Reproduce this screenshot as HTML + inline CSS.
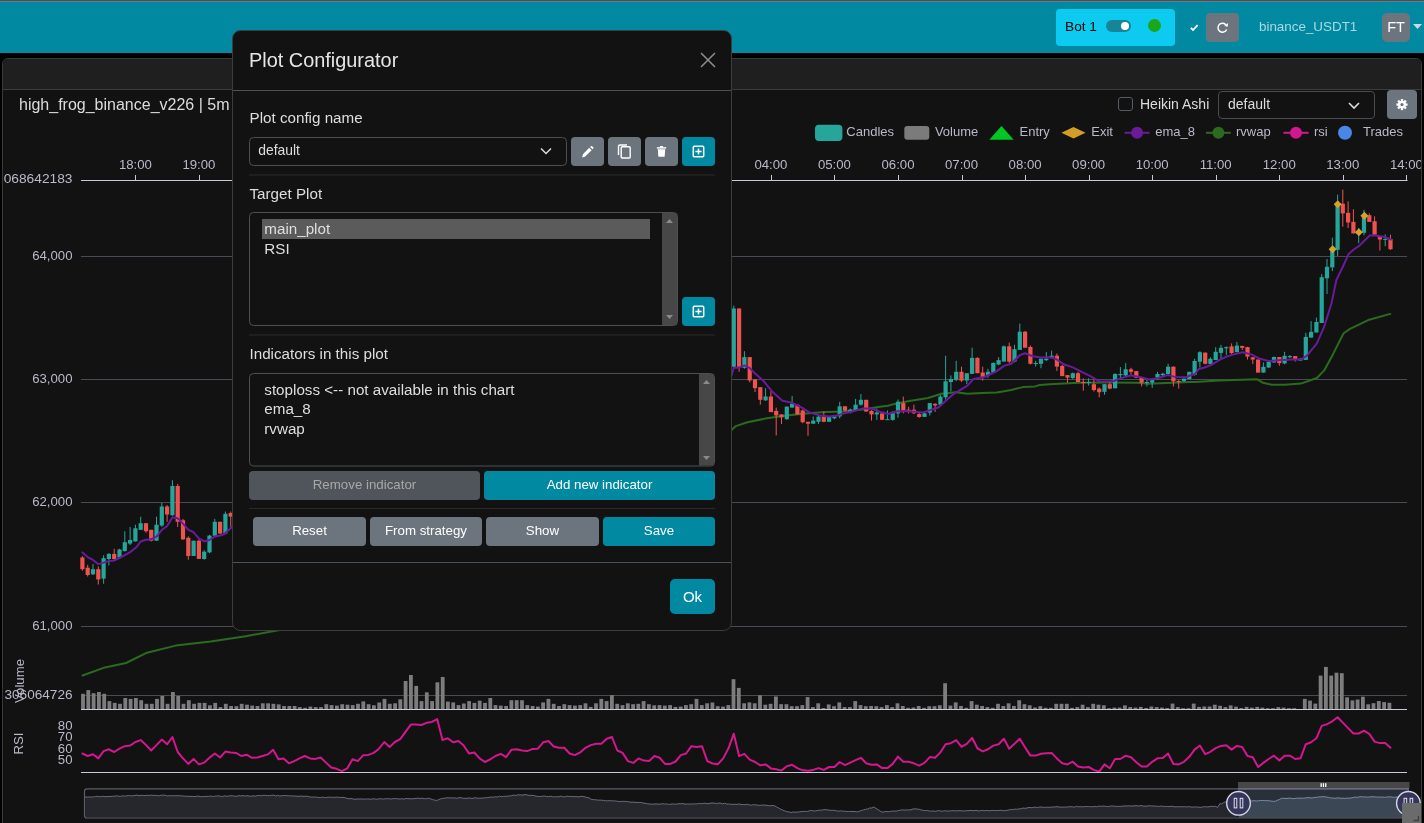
<!DOCTYPE html>
<html><head><meta charset="utf-8">
<style>
*{box-sizing:border-box;}
html,body{margin:0;padding:0;}
.abs{will-change:transform;}
body{width:1424px;height:823px;overflow:hidden;position:relative;background:#000;font-family:"Liberation Sans",sans-serif;color:#dee2e6;}
.abs{position:absolute;}
#topline0{left:0;top:0;width:1424px;height:1px;background:#41515b;}
#topline1{left:0;top:1px;width:1424px;height:1px;background:#6f7b82;}
#nav{left:0;top:2px;width:1424px;height:51px;background:#0289a2;}
#bot{left:1056px;top:9px;width:119px;height:37px;background:#0dcaf0;border-radius:4px;}
#bot .t{position:absolute;left:9px;top:10px;font-size:13.7px;color:#000;}
#sw{left:1106px;top:20px;width:25px;height:12px;border-radius:6px;background:#178596;}
#sw .k{position:absolute;left:15px;top:2px;width:8px;height:8px;border-radius:4px;background:#fff;}
#dot{left:1148px;top:19px;width:13px;height:13px;border-radius:50%;background:#1aa81a;}
#refresh{left:1206px;top:13px;width:33px;height:29px;background:#6c757d;border-radius:4px;}
#exch{left:1259px;top:19px;font-size:13.4px;color:#a9d9e2;}
#ft{left:1382px;top:13px;width:28px;height:29px;background:#6c757d;border-radius:5px;color:#fff;font-size:14.5px;text-align:center;line-height:29px;}
#card{left:2px;top:58px;width:1420px;height:780px;background:#121212;border:1px solid #393939;border-radius:6px;overflow:hidden;}
#cardhdr{left:0;top:0;width:1418px;height:31px;background:#1f1f1f;border-bottom:1px solid #3c3c3c;}
#title{left:19px;top:96px;font-size:16px;color:#dcdcdc;}
#chart{left:0;top:0;}
.lbl{font-family:"Liberation Sans",sans-serif;font-size:13.2px;fill:#b9b9ca;}
#hachk{left:1118px;top:97px;width:15px;height:14px;border:1px solid #555c63;border-radius:3px;background:#121212;}
#haLbl{left:1140px;top:96px;font-size:14px;color:#dcdcdc;}
#sel2{left:1218px;top:91px;width:157px;height:28px;border:1px solid #474c52;border-radius:4px;background:#121212;}
#sel2 .t{position:absolute;left:9px;top:3.5px;font-size:14px;color:#dcdcdc;}
#gear{left:1387px;top:90px;width:30px;height:29px;background:#6c757d;border-radius:4px;}
.legt{font-size:13px;color:#b9b9ca;position:absolute;top:124px;}
.mt{font-family:"Liberation Sans",sans-serif;font-size:19.9px;fill:#e6e6e6;}
.ml{font-family:"Liberation Sans",sans-serif;font-size:15.2px;fill:#dedede;}
.ms{font-family:"Liberation Sans",sans-serif;font-size:13.9px;fill:#dedede;}
.mb{font-family:"Liberation Sans",sans-serif;font-size:13.3px;}
.mok{font-family:"Liberation Sans",sans-serif;font-size:15px;}
/* modal */
#modal{left:232px;top:30px;width:500px;height:601px;background:#121212;border:1px solid #3d3d3d;border-radius:8px;}
#mhdr{left:0;top:0;width:498px;height:60px;border-bottom:1px solid #4a525a;}
#mtitle{left:16px;top:19px;font-size:19.9px;color:#e4e4e4;}
.mlbl{position:absolute;left:16px;font-size:15.2px;color:#dedede;}
.hr{position:absolute;left:16px;width:466px;height:1px;background:#2a2a2a;}
.btn{position:absolute;border-radius:4px;color:#fff;font-size:13.3px;text-align:center;}
.gray{background:#6c757d;}
.teal{background:#0289a2;}
#mfoot{left:0;top:531px;width:498px;height:1px;background:#4a525a;}
</style></head>
<body>
<div id="nav" class="abs"></div>
<div id="topline0" class="abs"></div>
<div id="topline1" class="abs"></div>
<div id="bot" class="abs"><span class="t">Bot 1</span></div>
<div id="sw" class="abs"><div class="k"></div></div>
<div id="dot" class="abs"></div>
<svg class="abs" style="left:1188px;top:21px" width="12" height="12" viewBox="0 0 12 12"><path d="M2.8,6.8 L5,9 L9.6,4.2" fill="none" stroke="#fff" stroke-width="1.8"/></svg>
<div id="refresh" class="abs"><svg width="33" height="29" viewBox="0 0 33 29"><g transform="translate(16.5,14.5) scale(0.85) translate(-16.5,-14.5)"><path d="M21.6,13.2 A5.3,5.3 0 1 0 21.4,16.8" fill="none" stroke="#fff" stroke-width="1.7"/><path d="M18.6,12.6 L22.8,13.4 L23.2,9.2 Z" fill="#fff"/></g></svg></div>
<div id="exch" class="abs">binance_USDT1</div>
<div id="ft" class="abs">FT</div>
<svg class="abs" style="left:1413px;top:24px" width="10" height="6"><path d="M0,0 L9,0 L4.5,5 Z" fill="#c8dde2"/></svg>

<div id="card" class="abs"><div id="cardhdr" class="abs"></div></div>
<div id="title" class="abs">high_frog_binance_v226 | 5m</div>

<svg id="chart" class="abs" width="1424" height="823" viewBox="0 0 1424 823">
<defs><clipPath id="cc"><rect x="3" y="59" width="1418" height="764"/></clipPath></defs>
<g clip-path="url(#cc)">
<line x1="81" y1="256.5" x2="1407" y2="256.5" stroke="#4a4956" stroke-width="1"/>
<line x1="81" y1="379.5" x2="1407" y2="379.5" stroke="#4a4956" stroke-width="1"/>
<line x1="81" y1="502.5" x2="1407" y2="502.5" stroke="#4a4956" stroke-width="1"/>
<line x1="81" y1="626.5" x2="1407" y2="626.5" stroke="#4a4956" stroke-width="1"/>
<line x1="81" y1="695.5" x2="1407" y2="695.5" stroke="#4a4956" stroke-width="1"/>
<line x1="135.5" y1="175" x2="135.5" y2="180.5" stroke="#c9c9dc" stroke-width="1"/>
<text x="135.4" y="169" text-anchor="middle" class="lbl">18:00</text>
<line x1="199.5" y1="175" x2="199.5" y2="180.5" stroke="#c9c9dc" stroke-width="1"/>
<text x="198.9" y="169" text-anchor="middle" class="lbl">19:00</text>
<line x1="262.5" y1="175" x2="262.5" y2="180.5" stroke="#c9c9dc" stroke-width="1"/>
<text x="262.5" y="169" text-anchor="middle" class="lbl">20:00</text>
<line x1="326.5" y1="175" x2="326.5" y2="180.5" stroke="#c9c9dc" stroke-width="1"/>
<text x="326.0" y="169" text-anchor="middle" class="lbl">21:00</text>
<line x1="390.5" y1="175" x2="390.5" y2="180.5" stroke="#c9c9dc" stroke-width="1"/>
<text x="389.6" y="169" text-anchor="middle" class="lbl">22:00</text>
<line x1="453.5" y1="175" x2="453.5" y2="180.5" stroke="#c9c9dc" stroke-width="1"/>
<text x="453.1" y="169" text-anchor="middle" class="lbl">23:00</text>
<line x1="517.5" y1="175" x2="517.5" y2="180.5" stroke="#c9c9dc" stroke-width="1"/>
<text x="516.7" y="169" text-anchor="middle" class="lbl">00:00</text>
<line x1="580.5" y1="175" x2="580.5" y2="180.5" stroke="#c9c9dc" stroke-width="1"/>
<text x="580.2" y="169" text-anchor="middle" class="lbl">01:00</text>
<line x1="644.5" y1="175" x2="644.5" y2="180.5" stroke="#c9c9dc" stroke-width="1"/>
<text x="643.8" y="169" text-anchor="middle" class="lbl">02:00</text>
<line x1="707.5" y1="175" x2="707.5" y2="180.5" stroke="#c9c9dc" stroke-width="1"/>
<text x="707.3" y="169" text-anchor="middle" class="lbl">03:00</text>
<line x1="771.5" y1="175" x2="771.5" y2="180.5" stroke="#c9c9dc" stroke-width="1"/>
<text x="770.9" y="169" text-anchor="middle" class="lbl">04:00</text>
<line x1="834.5" y1="175" x2="834.5" y2="180.5" stroke="#c9c9dc" stroke-width="1"/>
<text x="834.4" y="169" text-anchor="middle" class="lbl">05:00</text>
<line x1="898.5" y1="175" x2="898.5" y2="180.5" stroke="#c9c9dc" stroke-width="1"/>
<text x="898.0" y="169" text-anchor="middle" class="lbl">06:00</text>
<line x1="962.5" y1="175" x2="962.5" y2="180.5" stroke="#c9c9dc" stroke-width="1"/>
<text x="961.5" y="169" text-anchor="middle" class="lbl">07:00</text>
<line x1="1025.5" y1="175" x2="1025.5" y2="180.5" stroke="#c9c9dc" stroke-width="1"/>
<text x="1025.1" y="169" text-anchor="middle" class="lbl">08:00</text>
<line x1="1089.5" y1="175" x2="1089.5" y2="180.5" stroke="#c9c9dc" stroke-width="1"/>
<text x="1088.6" y="169" text-anchor="middle" class="lbl">09:00</text>
<line x1="1152.5" y1="175" x2="1152.5" y2="180.5" stroke="#c9c9dc" stroke-width="1"/>
<text x="1152.2" y="169" text-anchor="middle" class="lbl">10:00</text>
<line x1="1216.5" y1="175" x2="1216.5" y2="180.5" stroke="#c9c9dc" stroke-width="1"/>
<text x="1215.7" y="169" text-anchor="middle" class="lbl">11:00</text>
<line x1="1279.5" y1="175" x2="1279.5" y2="180.5" stroke="#c9c9dc" stroke-width="1"/>
<text x="1279.3" y="169" text-anchor="middle" class="lbl">12:00</text>
<line x1="1343.5" y1="175" x2="1343.5" y2="180.5" stroke="#c9c9dc" stroke-width="1"/>
<text x="1342.8" y="169" text-anchor="middle" class="lbl">13:00</text>
<line x1="1406.5" y1="175" x2="1406.5" y2="180.5" stroke="#c9c9dc" stroke-width="1"/>
<text x="1406.4" y="169" text-anchor="middle" class="lbl">14:00</text>
<line x1="81" y1="180.5" x2="1407.5" y2="180.5" stroke="#c9c9dc" stroke-width="1"/>
<text x="72.5" y="259.7" text-anchor="end" class="lbl">64,000</text>
<text x="72.5" y="382.7" text-anchor="end" class="lbl">63,000</text>
<text x="72.5" y="505.7" text-anchor="end" class="lbl">62,000</text>
<text x="72.5" y="629.7" text-anchor="end" class="lbl">61,000</text>
<text x="-4" y="183.4" class="lbl" textLength="76.5" lengthAdjust="spacingAndGlyphs">3068642183</text>
<text x="4.5" y="698.5" class="lbl" textLength="68" lengthAdjust="spacingAndGlyphs">306064726</text>
<polyline points="82.5,675.5 105.0,667.4 126.0,663.0 147.0,652.7 175.6,645.6 210.7,641.4 245.8,636.2 281.0,629.8 300.0,626.0" fill="none" stroke="#2b6b1f" stroke-width="2" stroke-linejoin="round" stroke-linecap="round"/>
<polyline points="731.5,430.0 735.8,426.1 747.4,422.2 766.9,418.3 786.3,415.4 805.8,413.4 825.2,412.1 844.6,411.5 864.1,409.2 880.0,406.8 888.0,405.7 894.6,403.9 909.2,401.0 928.1,398.0 941.3,393.7 955.8,392.2 967.5,393.7 982.1,392.9 996.7,392.5 1011.3,390.0 1022.9,387.1 1035.0,386.4 1040.0,384.9 1049.6,384.2 1078.8,382.7 1107.9,382.4 1137.1,382.7 1148.8,383.7 1166.3,383.0 1190.0,382.1 1195.0,382.0 1219.2,380.6 1257.1,379.2 1262.9,382.8 1271.7,384.7 1284.8,384.7 1300.9,383.6 1316.9,378.0 1324.2,370.4 1332.9,354.4 1343.2,334.0 1343.7,333.3 1350.0,328.9 1369.2,319.7 1390.3,313.9" fill="none" stroke="#2b6b1f" stroke-width="2" stroke-linejoin="round" stroke-linecap="round"/>
<rect x="81.9" y="556.1" width="1" height="14.6" fill="#ef5350"/>
<rect x="80.3" y="557.5" width="4.2" height="11.7" fill="#ef5350"/>
<rect x="87.2" y="564.8" width="1" height="11.7" fill="#ef5350"/>
<rect x="85.6" y="567.7" width="4.2" height="7.3" fill="#ef5350"/>
<rect x="92.5" y="564.1" width="1" height="10.9" fill="#26a69a"/>
<rect x="90.9" y="569.2" width="4.2" height="5.1" fill="#26a69a"/>
<rect x="97.8" y="566.3" width="1" height="18.2" fill="#ef5350"/>
<rect x="96.2" y="569.2" width="4.2" height="10.2" fill="#ef5350"/>
<rect x="103.1" y="555.3" width="1" height="28.4" fill="#26a69a"/>
<rect x="101.5" y="558.2" width="4.2" height="20.4" fill="#26a69a"/>
<rect x="108.4" y="553.1" width="1" height="12.4" fill="#26a69a"/>
<rect x="106.8" y="553.9" width="4.2" height="5.1" fill="#26a69a"/>
<rect x="113.7" y="548.8" width="1" height="10.9" fill="#ef5350"/>
<rect x="112.1" y="553.9" width="4.2" height="5.1" fill="#ef5350"/>
<rect x="119.0" y="548.8" width="1" height="10.2" fill="#26a69a"/>
<rect x="117.4" y="549.5" width="4.2" height="8.0" fill="#26a69a"/>
<rect x="124.3" y="531.3" width="1" height="20.4" fill="#26a69a"/>
<rect x="122.7" y="542.2" width="4.2" height="8.8" fill="#26a69a"/>
<rect x="129.6" y="526.9" width="1" height="18.2" fill="#26a69a"/>
<rect x="128.0" y="540.0" width="4.2" height="3.6" fill="#26a69a"/>
<rect x="134.9" y="524.7" width="1" height="16.8" fill="#26a69a"/>
<rect x="133.3" y="528.3" width="4.2" height="13.1" fill="#26a69a"/>
<rect x="140.2" y="516.7" width="1" height="13.1" fill="#26a69a"/>
<rect x="138.6" y="523.2" width="4.2" height="6.6" fill="#26a69a"/>
<rect x="145.5" y="523.2" width="1" height="9.5" fill="#ef5350"/>
<rect x="143.9" y="523.2" width="4.2" height="8.0" fill="#ef5350"/>
<rect x="150.7" y="529.8" width="1" height="11.7" fill="#ef5350"/>
<rect x="149.1" y="529.8" width="4.2" height="10.9" fill="#ef5350"/>
<rect x="156.0" y="516.7" width="1" height="24.1" fill="#26a69a"/>
<rect x="154.4" y="524.7" width="4.2" height="16.0" fill="#26a69a"/>
<rect x="161.3" y="502.8" width="1" height="24.1" fill="#26a69a"/>
<rect x="159.7" y="506.5" width="4.2" height="19.0" fill="#26a69a"/>
<rect x="166.6" y="505.0" width="1" height="16.8" fill="#ef5350"/>
<rect x="165.0" y="506.5" width="4.2" height="8.0" fill="#ef5350"/>
<rect x="171.9" y="480.2" width="1" height="35.7" fill="#26a69a"/>
<rect x="170.3" y="486.0" width="4.2" height="29.2" fill="#26a69a"/>
<rect x="177.2" y="483.9" width="1" height="43.0" fill="#ef5350"/>
<rect x="175.6" y="486.0" width="4.2" height="35.7" fill="#ef5350"/>
<rect x="182.5" y="518.9" width="1" height="21.1" fill="#ef5350"/>
<rect x="180.9" y="520.3" width="4.2" height="19.0" fill="#ef5350"/>
<rect x="187.8" y="536.4" width="1" height="23.3" fill="#ef5350"/>
<rect x="186.2" y="537.8" width="4.2" height="18.2" fill="#ef5350"/>
<rect x="193.1" y="540.7" width="1" height="15.3" fill="#26a69a"/>
<rect x="191.5" y="540.7" width="4.2" height="15.3" fill="#26a69a"/>
<rect x="198.4" y="539.3" width="1" height="19.7" fill="#ef5350"/>
<rect x="196.8" y="540.7" width="4.2" height="18.2" fill="#ef5350"/>
<rect x="203.7" y="550.2" width="1" height="9.5" fill="#26a69a"/>
<rect x="202.1" y="551.7" width="4.2" height="7.3" fill="#26a69a"/>
<rect x="209.0" y="534.9" width="1" height="18.2" fill="#26a69a"/>
<rect x="207.4" y="535.6" width="4.2" height="16.8" fill="#26a69a"/>
<rect x="214.3" y="518.9" width="1" height="17.5" fill="#26a69a"/>
<rect x="212.7" y="521.8" width="4.2" height="13.9" fill="#26a69a"/>
<rect x="219.6" y="521.8" width="1" height="12.4" fill="#ef5350"/>
<rect x="218.0" y="521.8" width="4.2" height="11.7" fill="#ef5350"/>
<rect x="224.9" y="511.6" width="1" height="22.6" fill="#26a69a"/>
<rect x="223.3" y="513.8" width="4.2" height="19.7" fill="#26a69a"/>
<rect x="230.2" y="511.6" width="1" height="15.3" fill="#ef5350"/>
<rect x="228.6" y="513.0" width="4.2" height="3.6" fill="#ef5350"/>
<rect x="733.3" y="305.6" width="1" height="61.2" fill="#26a69a"/>
<rect x="731.7" y="308.5" width="4.2" height="58.3" fill="#26a69a"/>
<rect x="738.6" y="308.5" width="1" height="63.2" fill="#ef5350"/>
<rect x="737.0" y="308.5" width="4.2" height="58.3" fill="#ef5350"/>
<rect x="743.9" y="351.2" width="1" height="17.5" fill="#26a69a"/>
<rect x="742.3" y="357.1" width="4.2" height="10.7" fill="#26a69a"/>
<rect x="749.2" y="357.1" width="1" height="25.3" fill="#ef5350"/>
<rect x="747.6" y="357.1" width="4.2" height="23.3" fill="#ef5350"/>
<rect x="754.5" y="379.4" width="1" height="12.6" fill="#ef5350"/>
<rect x="752.9" y="379.4" width="4.2" height="8.7" fill="#ef5350"/>
<rect x="759.8" y="387.2" width="1" height="17.5" fill="#ef5350"/>
<rect x="758.2" y="387.2" width="4.2" height="12.6" fill="#ef5350"/>
<rect x="765.1" y="388.2" width="1" height="12.6" fill="#26a69a"/>
<rect x="763.5" y="396.5" width="4.2" height="3.9" fill="#26a69a"/>
<rect x="770.4" y="391.1" width="1" height="21.0" fill="#ef5350"/>
<rect x="768.8" y="396.5" width="4.2" height="15.6" fill="#ef5350"/>
<rect x="775.7" y="407.6" width="1" height="27.8" fill="#ef5350"/>
<rect x="774.1" y="410.9" width="4.2" height="4.5" fill="#ef5350"/>
<rect x="781.0" y="414.4" width="1" height="9.7" fill="#ef5350"/>
<rect x="779.4" y="414.4" width="4.2" height="2.9" fill="#ef5350"/>
<rect x="786.3" y="406.6" width="1" height="13.2" fill="#26a69a"/>
<rect x="784.7" y="406.6" width="4.2" height="12.6" fill="#26a69a"/>
<rect x="791.6" y="395.9" width="1" height="11.7" fill="#26a69a"/>
<rect x="790.0" y="403.7" width="4.2" height="3.9" fill="#26a69a"/>
<rect x="796.9" y="404.7" width="1" height="9.7" fill="#ef5350"/>
<rect x="795.3" y="404.7" width="4.2" height="9.7" fill="#ef5350"/>
<rect x="802.2" y="409.6" width="1" height="13.6" fill="#ef5350"/>
<rect x="800.6" y="410.5" width="4.2" height="11.7" fill="#ef5350"/>
<rect x="807.5" y="421.8" width="1" height="14.0" fill="#ef5350"/>
<rect x="805.9" y="421.8" width="4.2" height="1.9" fill="#ef5350"/>
<rect x="812.7" y="416.4" width="1" height="7.4" fill="#26a69a"/>
<rect x="811.1" y="420.6" width="4.2" height="3.1" fill="#26a69a"/>
<rect x="818.0" y="415.4" width="1" height="8.7" fill="#26a69a"/>
<rect x="816.4" y="416.7" width="4.2" height="5.1" fill="#26a69a"/>
<rect x="823.3" y="411.5" width="1" height="10.7" fill="#ef5350"/>
<rect x="821.7" y="416.4" width="4.2" height="5.4" fill="#ef5350"/>
<rect x="828.6" y="416.4" width="1" height="5.4" fill="#26a69a"/>
<rect x="827.0" y="416.4" width="4.2" height="5.4" fill="#26a69a"/>
<rect x="833.9" y="415.4" width="1" height="3.9" fill="#26a69a"/>
<rect x="832.3" y="416.4" width="4.2" height="1.9" fill="#26a69a"/>
<rect x="839.2" y="401.8" width="1" height="16.5" fill="#26a69a"/>
<rect x="837.6" y="406.3" width="4.2" height="10.1" fill="#26a69a"/>
<rect x="844.5" y="406.3" width="1" height="5.2" fill="#ef5350"/>
<rect x="842.9" y="406.3" width="4.2" height="4.3" fill="#ef5350"/>
<rect x="849.8" y="408.6" width="1" height="4.9" fill="#26a69a"/>
<rect x="848.2" y="409.6" width="4.2" height="2.9" fill="#26a69a"/>
<rect x="855.1" y="398.9" width="1" height="11.7" fill="#26a69a"/>
<rect x="853.5" y="404.7" width="4.2" height="5.8" fill="#26a69a"/>
<rect x="860.4" y="394.0" width="1" height="11.7" fill="#26a69a"/>
<rect x="858.8" y="399.8" width="4.2" height="4.9" fill="#26a69a"/>
<rect x="865.7" y="399.8" width="1" height="11.7" fill="#ef5350"/>
<rect x="864.1" y="399.8" width="4.2" height="11.7" fill="#ef5350"/>
<rect x="871.0" y="410.1" width="1" height="10.5" fill="#ef5350"/>
<rect x="869.4" y="410.9" width="4.2" height="3.5" fill="#ef5350"/>
<rect x="876.3" y="408.6" width="1" height="11.3" fill="#26a69a"/>
<rect x="874.7" y="412.5" width="4.2" height="1.9" fill="#26a69a"/>
<rect x="881.6" y="413.4" width="1" height="6.8" fill="#ef5350"/>
<rect x="880.0" y="413.4" width="4.2" height="6.4" fill="#ef5350"/>
<rect x="886.9" y="410.4" width="1" height="9.5" fill="#26a69a"/>
<rect x="885.3" y="419.2" width="4.2" height="1.0" fill="#26a69a"/>
<rect x="892.2" y="411.2" width="1" height="9.5" fill="#26a69a"/>
<rect x="890.6" y="411.9" width="4.2" height="8.0" fill="#26a69a"/>
<rect x="897.5" y="399.5" width="1" height="18.2" fill="#26a69a"/>
<rect x="895.9" y="401.7" width="4.2" height="11.7" fill="#26a69a"/>
<rect x="902.8" y="396.6" width="1" height="16.8" fill="#ef5350"/>
<rect x="901.2" y="403.1" width="4.2" height="7.3" fill="#ef5350"/>
<rect x="908.1" y="406.8" width="1" height="6.6" fill="#ef5350"/>
<rect x="906.5" y="409.7" width="4.2" height="1.5" fill="#ef5350"/>
<rect x="913.4" y="404.6" width="1" height="9.5" fill="#ef5350"/>
<rect x="911.8" y="409.7" width="4.2" height="3.6" fill="#ef5350"/>
<rect x="918.7" y="412.6" width="1" height="5.1" fill="#ef5350"/>
<rect x="917.1" y="414.1" width="4.2" height="2.9" fill="#ef5350"/>
<rect x="924.0" y="412.6" width="1" height="4.4" fill="#26a69a"/>
<rect x="922.4" y="413.3" width="4.2" height="3.6" fill="#26a69a"/>
<rect x="929.3" y="403.1" width="1" height="12.4" fill="#26a69a"/>
<rect x="927.7" y="403.1" width="4.2" height="9.5" fill="#26a69a"/>
<rect x="934.6" y="403.1" width="1" height="8.8" fill="#ef5350"/>
<rect x="933.0" y="403.9" width="4.2" height="1.5" fill="#ef5350"/>
<rect x="939.9" y="395.1" width="1" height="10.2" fill="#26a69a"/>
<rect x="938.3" y="396.6" width="4.2" height="8.0" fill="#26a69a"/>
<rect x="945.1" y="355.7" width="1" height="43.8" fill="#26a69a"/>
<rect x="943.5" y="381.3" width="4.2" height="16.0" fill="#26a69a"/>
<rect x="950.4" y="375.4" width="1" height="16.0" fill="#26a69a"/>
<rect x="948.8" y="379.1" width="4.2" height="2.9" fill="#26a69a"/>
<rect x="955.7" y="360.8" width="1" height="20.4" fill="#26a69a"/>
<rect x="954.1" y="371.8" width="4.2" height="8.0" fill="#26a69a"/>
<rect x="961.0" y="366.7" width="1" height="15.3" fill="#ef5350"/>
<rect x="959.4" y="371.8" width="4.2" height="8.8" fill="#ef5350"/>
<rect x="966.3" y="373.2" width="1" height="10.9" fill="#26a69a"/>
<rect x="964.7" y="373.2" width="4.2" height="7.3" fill="#26a69a"/>
<rect x="971.6" y="347.7" width="1" height="26.3" fill="#26a69a"/>
<rect x="970.0" y="357.9" width="4.2" height="16.0" fill="#26a69a"/>
<rect x="976.9" y="357.2" width="1" height="16.0" fill="#ef5350"/>
<rect x="975.3" y="357.9" width="4.2" height="15.3" fill="#ef5350"/>
<rect x="982.2" y="366.7" width="1" height="13.9" fill="#ef5350"/>
<rect x="980.6" y="372.5" width="4.2" height="4.4" fill="#ef5350"/>
<rect x="987.5" y="368.9" width="1" height="8.8" fill="#26a69a"/>
<rect x="985.9" y="371.8" width="4.2" height="3.6" fill="#26a69a"/>
<rect x="992.8" y="362.3" width="1" height="10.2" fill="#26a69a"/>
<rect x="991.2" y="363.0" width="4.2" height="9.5" fill="#26a69a"/>
<rect x="998.1" y="357.2" width="1" height="8.0" fill="#26a69a"/>
<rect x="996.5" y="360.1" width="4.2" height="4.4" fill="#26a69a"/>
<rect x="1003.4" y="345.5" width="1" height="16.0" fill="#26a69a"/>
<rect x="1001.8" y="346.3" width="4.2" height="15.3" fill="#26a69a"/>
<rect x="1008.7" y="342.6" width="1" height="20.4" fill="#ef5350"/>
<rect x="1007.1" y="346.3" width="4.2" height="15.3" fill="#ef5350"/>
<rect x="1014.0" y="344.8" width="1" height="17.5" fill="#26a69a"/>
<rect x="1012.4" y="349.2" width="4.2" height="12.4" fill="#26a69a"/>
<rect x="1019.3" y="323.6" width="1" height="26.3" fill="#26a69a"/>
<rect x="1017.7" y="331.7" width="4.2" height="18.2" fill="#26a69a"/>
<rect x="1024.6" y="330.9" width="1" height="16.8" fill="#ef5350"/>
<rect x="1023.0" y="331.7" width="4.2" height="16.0" fill="#ef5350"/>
<rect x="1029.9" y="345.5" width="1" height="19.0" fill="#ef5350"/>
<rect x="1028.3" y="347.0" width="4.2" height="16.8" fill="#ef5350"/>
<rect x="1035.2" y="360.8" width="1" height="5.8" fill="#26a69a"/>
<rect x="1033.6" y="363.0" width="4.2" height="1.0" fill="#26a69a"/>
<rect x="1040.5" y="358.7" width="1" height="9.5" fill="#26a69a"/>
<rect x="1038.9" y="358.7" width="4.2" height="5.1" fill="#26a69a"/>
<rect x="1045.8" y="352.1" width="1" height="8.8" fill="#26a69a"/>
<rect x="1044.2" y="358.7" width="4.2" height="1.5" fill="#26a69a"/>
<rect x="1051.1" y="350.6" width="1" height="7.3" fill="#26a69a"/>
<rect x="1049.5" y="355.7" width="4.2" height="1.5" fill="#26a69a"/>
<rect x="1056.4" y="353.5" width="1" height="17.5" fill="#ef5350"/>
<rect x="1054.8" y="355.7" width="4.2" height="10.9" fill="#ef5350"/>
<rect x="1061.7" y="364.5" width="1" height="11.7" fill="#ef5350"/>
<rect x="1060.1" y="365.9" width="4.2" height="10.2" fill="#ef5350"/>
<rect x="1067.0" y="375.1" width="1" height="7.6" fill="#ef5350"/>
<rect x="1065.4" y="375.1" width="4.2" height="2.5" fill="#ef5350"/>
<rect x="1072.3" y="372.5" width="1" height="6.6" fill="#26a69a"/>
<rect x="1070.7" y="373.2" width="4.2" height="4.8" fill="#26a69a"/>
<rect x="1077.5" y="371.8" width="1" height="10.2" fill="#ef5350"/>
<rect x="1075.9" y="373.2" width="4.2" height="8.8" fill="#ef5350"/>
<rect x="1082.8" y="378.3" width="1" height="12.4" fill="#ef5350"/>
<rect x="1081.2" y="382.0" width="4.2" height="1.0" fill="#ef5350"/>
<rect x="1088.1" y="378.3" width="1" height="7.3" fill="#26a69a"/>
<rect x="1086.5" y="382.0" width="4.2" height="1.0" fill="#26a69a"/>
<rect x="1093.4" y="379.1" width="1" height="12.4" fill="#ef5350"/>
<rect x="1091.8" y="384.2" width="4.2" height="5.8" fill="#ef5350"/>
<rect x="1098.7" y="387.4" width="1" height="9.9" fill="#ef5350"/>
<rect x="1097.1" y="388.6" width="4.2" height="3.6" fill="#ef5350"/>
<rect x="1104.0" y="384.2" width="1" height="10.5" fill="#26a69a"/>
<rect x="1102.4" y="384.2" width="4.2" height="7.6" fill="#26a69a"/>
<rect x="1109.3" y="382.0" width="1" height="7.3" fill="#ef5350"/>
<rect x="1107.7" y="384.2" width="4.2" height="4.4" fill="#ef5350"/>
<rect x="1114.6" y="373.2" width="1" height="15.0" fill="#26a69a"/>
<rect x="1113.0" y="374.0" width="4.2" height="14.3" fill="#26a69a"/>
<rect x="1119.9" y="367.0" width="1" height="12.1" fill="#26a69a"/>
<rect x="1118.3" y="374.0" width="4.2" height="1.2" fill="#26a69a"/>
<rect x="1125.2" y="363.0" width="1" height="13.1" fill="#26a69a"/>
<rect x="1123.6" y="369.3" width="4.2" height="6.1" fill="#26a69a"/>
<rect x="1130.5" y="367.8" width="1" height="6.9" fill="#ef5350"/>
<rect x="1128.9" y="369.3" width="4.2" height="2.5" fill="#ef5350"/>
<rect x="1135.8" y="371.1" width="1" height="7.0" fill="#ef5350"/>
<rect x="1134.2" y="371.1" width="4.2" height="6.6" fill="#ef5350"/>
<rect x="1141.1" y="376.9" width="1" height="9.5" fill="#ef5350"/>
<rect x="1139.5" y="377.6" width="4.2" height="5.1" fill="#ef5350"/>
<rect x="1146.4" y="379.8" width="1" height="6.6" fill="#26a69a"/>
<rect x="1144.8" y="382.0" width="4.2" height="1.0" fill="#26a69a"/>
<rect x="1151.7" y="379.1" width="1" height="8.8" fill="#26a69a"/>
<rect x="1150.1" y="380.1" width="4.2" height="2.6" fill="#26a69a"/>
<rect x="1157.0" y="371.8" width="1" height="8.0" fill="#26a69a"/>
<rect x="1155.4" y="374.0" width="4.2" height="3.6" fill="#26a69a"/>
<rect x="1162.3" y="372.8" width="1" height="3.8" fill="#26a69a"/>
<rect x="1160.7" y="373.7" width="4.2" height="1.5" fill="#26a69a"/>
<rect x="1167.6" y="363.8" width="1" height="10.9" fill="#26a69a"/>
<rect x="1166.0" y="366.7" width="4.2" height="7.3" fill="#26a69a"/>
<rect x="1172.9" y="366.4" width="1" height="20.0" fill="#ef5350"/>
<rect x="1171.3" y="366.7" width="4.2" height="14.6" fill="#ef5350"/>
<rect x="1178.2" y="380.1" width="1" height="8.5" fill="#ef5350"/>
<rect x="1176.6" y="381.0" width="4.2" height="1.0" fill="#ef5350"/>
<rect x="1183.5" y="378.3" width="1" height="3.6" fill="#26a69a"/>
<rect x="1181.9" y="378.6" width="4.2" height="2.6" fill="#26a69a"/>
<rect x="1188.8" y="371.8" width="1" height="7.3" fill="#26a69a"/>
<rect x="1187.2" y="371.8" width="4.2" height="7.3" fill="#26a69a"/>
<rect x="1194.1" y="358.8" width="1" height="16.8" fill="#26a69a"/>
<rect x="1192.5" y="361.0" width="4.2" height="13.9" fill="#26a69a"/>
<rect x="1199.4" y="351.2" width="1" height="16.3" fill="#26a69a"/>
<rect x="1197.8" y="352.2" width="4.2" height="9.5" fill="#26a69a"/>
<rect x="1204.7" y="352.6" width="1" height="11.7" fill="#ef5350"/>
<rect x="1203.1" y="352.6" width="4.2" height="11.2" fill="#ef5350"/>
<rect x="1209.9" y="357.3" width="1" height="7.3" fill="#26a69a"/>
<rect x="1208.3" y="358.8" width="4.2" height="5.1" fill="#26a69a"/>
<rect x="1215.2" y="347.1" width="1" height="12.8" fill="#26a69a"/>
<rect x="1213.6" y="351.8" width="4.2" height="8.2" fill="#26a69a"/>
<rect x="1220.5" y="344.9" width="1" height="13.9" fill="#26a69a"/>
<rect x="1218.9" y="347.8" width="4.2" height="5.1" fill="#26a69a"/>
<rect x="1225.8" y="346.4" width="1" height="8.8" fill="#26a69a"/>
<rect x="1224.2" y="347.1" width="4.2" height="1.2" fill="#26a69a"/>
<rect x="1231.1" y="343.4" width="1" height="10.9" fill="#ef5350"/>
<rect x="1229.5" y="346.4" width="4.2" height="6.6" fill="#ef5350"/>
<rect x="1236.4" y="342.0" width="1" height="10.2" fill="#26a69a"/>
<rect x="1234.8" y="345.6" width="4.2" height="6.6" fill="#26a69a"/>
<rect x="1241.7" y="345.9" width="1" height="4.1" fill="#ef5350"/>
<rect x="1240.1" y="345.9" width="4.2" height="1.9" fill="#ef5350"/>
<rect x="1247.0" y="346.8" width="1" height="12.7" fill="#ef5350"/>
<rect x="1245.4" y="347.1" width="4.2" height="9.5" fill="#ef5350"/>
<rect x="1252.3" y="357.3" width="1" height="6.6" fill="#ef5350"/>
<rect x="1250.7" y="357.3" width="4.2" height="2.2" fill="#ef5350"/>
<rect x="1257.6" y="359.5" width="1" height="13.1" fill="#ef5350"/>
<rect x="1256.0" y="359.5" width="4.2" height="13.1" fill="#ef5350"/>
<rect x="1262.9" y="362.4" width="1" height="10.2" fill="#26a69a"/>
<rect x="1261.3" y="366.8" width="4.2" height="5.8" fill="#26a69a"/>
<rect x="1268.2" y="361.7" width="1" height="6.1" fill="#26a69a"/>
<rect x="1266.6" y="361.7" width="4.2" height="5.8" fill="#26a69a"/>
<rect x="1273.5" y="356.6" width="1" height="6.3" fill="#26a69a"/>
<rect x="1271.9" y="357.0" width="4.2" height="5.4" fill="#26a69a"/>
<rect x="1278.8" y="357.0" width="1" height="8.8" fill="#ef5350"/>
<rect x="1277.2" y="357.0" width="4.2" height="6.1" fill="#ef5350"/>
<rect x="1284.1" y="351.8" width="1" height="12.5" fill="#26a69a"/>
<rect x="1282.5" y="355.8" width="4.2" height="7.6" fill="#26a69a"/>
<rect x="1289.4" y="355.1" width="1" height="2.9" fill="#26a69a"/>
<rect x="1287.8" y="356.1" width="4.2" height="1.2" fill="#26a69a"/>
<rect x="1294.7" y="356.1" width="1" height="5.5" fill="#ef5350"/>
<rect x="1293.1" y="356.1" width="4.2" height="3.8" fill="#ef5350"/>
<rect x="1300.0" y="358.0" width="1" height="2.9" fill="#26a69a"/>
<rect x="1298.4" y="358.8" width="4.2" height="1.8" fill="#26a69a"/>
<rect x="1305.3" y="332.8" width="1" height="27.1" fill="#26a69a"/>
<rect x="1303.7" y="336.9" width="4.2" height="23.0" fill="#26a69a"/>
<rect x="1310.6" y="321.1" width="1" height="16.5" fill="#26a69a"/>
<rect x="1309.0" y="331.8" width="4.2" height="5.8" fill="#26a69a"/>
<rect x="1315.9" y="317.6" width="1" height="14.9" fill="#26a69a"/>
<rect x="1314.3" y="322.0" width="4.2" height="10.5" fill="#26a69a"/>
<rect x="1321.2" y="274.1" width="1" height="48.9" fill="#26a69a"/>
<rect x="1319.6" y="277.2" width="4.2" height="45.8" fill="#26a69a"/>
<rect x="1326.5" y="259.0" width="1" height="35.0" fill="#26a69a"/>
<rect x="1324.9" y="266.8" width="4.2" height="11.5" fill="#26a69a"/>
<rect x="1331.8" y="237.7" width="1" height="33.4" fill="#26a69a"/>
<rect x="1330.2" y="248.6" width="4.2" height="18.8" fill="#26a69a"/>
<rect x="1337.1" y="194.6" width="1" height="61.3" fill="#26a69a"/>
<rect x="1335.5" y="204.3" width="4.2" height="45.5" fill="#26a69a"/>
<rect x="1342.3" y="189.7" width="1" height="37.0" fill="#ef5350"/>
<rect x="1340.7" y="203.7" width="4.2" height="9.7" fill="#ef5350"/>
<rect x="1347.6" y="201.3" width="1" height="26.7" fill="#ef5350"/>
<rect x="1346.0" y="212.8" width="4.2" height="9.7" fill="#ef5350"/>
<rect x="1352.9" y="209.2" width="1" height="24.3" fill="#ef5350"/>
<rect x="1351.3" y="221.9" width="4.2" height="11.5" fill="#ef5350"/>
<rect x="1358.2" y="228.0" width="1" height="15.2" fill="#26a69a"/>
<rect x="1356.6" y="231.0" width="4.2" height="2.4" fill="#26a69a"/>
<rect x="1363.5" y="209.8" width="1" height="25.5" fill="#26a69a"/>
<rect x="1361.9" y="216.4" width="4.2" height="16.4" fill="#26a69a"/>
<rect x="1368.8" y="213.4" width="1" height="8.5" fill="#ef5350"/>
<rect x="1367.2" y="215.2" width="4.2" height="6.7" fill="#ef5350"/>
<rect x="1374.1" y="216.4" width="1" height="18.2" fill="#ef5350"/>
<rect x="1372.5" y="221.3" width="4.2" height="13.4" fill="#ef5350"/>
<rect x="1379.4" y="236.5" width="1" height="14.0" fill="#ef5350"/>
<rect x="1377.8" y="237.1" width="4.2" height="2.4" fill="#ef5350"/>
<rect x="1384.7" y="234.4" width="1" height="11.8" fill="#26a69a"/>
<rect x="1383.1" y="238.9" width="4.2" height="1.0" fill="#26a69a"/>
<rect x="1390.0" y="234.7" width="1" height="15.2" fill="#ef5350"/>
<rect x="1388.4" y="238.9" width="4.2" height="10.3" fill="#ef5350"/>
<polyline points="82.4,552.4 88.2,557.5 92.6,559.7 98.4,564.1 103.5,562.6 108.6,561.2 114.5,560.4 120.3,557.5 129.8,552.4 136.3,547.3 140.7,541.5 145.8,539.7 150.9,539.3 156.8,536.4 161.9,529.8 167.0,526.2 172.5,517.4 177.2,518.1 180.1,520.3 188.4,529.8 193.2,532.0 199.1,538.6 204.9,541.5 209.3,540.0 215.1,536.4 220.2,535.6 223.9,534.2 231.9,526.9" fill="none" stroke="#6a1b9a" stroke-width="2" stroke-linejoin="round" stroke-linecap="round"/>
<polyline points="731.5,375.5 733.8,367.8 738.7,367.8 744.5,365.4 749.4,367.8 755.2,373.6 763.0,380.4 772.7,392.1 782.4,400.8 792.2,402.8 801.9,407.6 809.6,412.5 819.4,415.4 829.1,416.4 836.9,415.4 844.6,413.4 852.4,411.5 862.1,408.6 871.9,408.6 880.0,411.9 883.5,412.5 887.3,414.1 888.0,414.0 897.5,411.2 909.2,411.2 922.3,412.6 938.3,407.5 952.9,394.4 967.5,385.6 973.3,379.1 985.0,376.9 996.7,371.1 1004.0,365.9 1011.3,363.8 1020.0,355.0 1025.1,353.3 1033.2,356.5 1035.0,356.5 1040.0,357.6 1042.3,357.6 1049.6,357.2 1055.4,358.7 1064.2,364.5 1072.9,367.4 1081.7,371.8 1090.4,376.2 1099.2,381.3 1107.9,381.6 1113.8,381.0 1122.5,377.6 1131.3,375.4 1140.0,376.9 1148.8,379.5 1157.5,378.3 1167.7,375.1 1175.0,376.9 1186.7,377.2 1190.0,375.5 1195.0,374.0 1198.8,369.0 1204.6,367.5 1210.4,365.3 1219.2,360.2 1226.5,356.6 1233.8,354.4 1242.5,352.2 1251.3,354.4 1260.0,358.8 1268.8,361.0 1277.5,360.2 1292.1,359.5 1300.9,359.5 1306.7,355.8 1316.9,343.4 1324.2,326.7 1331.5,303.3 1336.4,280.0 1342.5,267.5 1348.6,254.1 1353.4,249.8 1359.5,245.6 1365.6,239.5 1369.8,235.6 1375.3,235.6 1385.0,237.1 1390.9,239.5" fill="none" stroke="#6a1b9a" stroke-width="2" stroke-linejoin="round" stroke-linecap="round"/>
<path d="M1332.6,245.2 L1336.6,249.2 L1332.6,253.2 L1328.6,249.2 Z" fill="#d4a22b"/>
<path d="M1337.7,200.3 L1341.7,204.3 L1337.7,208.3 L1333.7,204.3 Z" fill="#d4a22b"/>
<path d="M1358.9,228.2 L1362.9,232.2 L1358.9,236.2 L1354.9,232.2 Z" fill="#d4a22b"/>
<path d="M1364.4,211.8 L1368.4,215.8 L1364.4,219.8 L1360.4,215.8 Z" fill="#d4a22b"/>
<rect x="81.1" y="693.8" width="3.8" height="15.5" fill="#7d7d7d"/>
<rect x="86.4" y="690.1" width="3.8" height="19.2" fill="#7d7d7d"/>
<rect x="91.7" y="693.2" width="3.8" height="16.1" fill="#7d7d7d"/>
<rect x="97.0" y="692.0" width="3.8" height="17.3" fill="#7d7d7d"/>
<rect x="102.3" y="693.8" width="3.8" height="15.5" fill="#7d7d7d"/>
<rect x="107.5" y="701.1" width="3.8" height="8.2" fill="#7d7d7d"/>
<rect x="112.8" y="702.9" width="3.8" height="6.4" fill="#7d7d7d"/>
<rect x="118.1" y="703.8" width="3.8" height="5.5" fill="#7d7d7d"/>
<rect x="123.4" y="698.0" width="3.8" height="11.3" fill="#7d7d7d"/>
<rect x="128.7" y="698.9" width="3.8" height="10.4" fill="#7d7d7d"/>
<rect x="134.0" y="698.0" width="3.8" height="11.3" fill="#7d7d7d"/>
<rect x="139.3" y="700.2" width="3.8" height="9.1" fill="#7d7d7d"/>
<rect x="144.6" y="703.8" width="3.8" height="5.5" fill="#7d7d7d"/>
<rect x="149.9" y="703.8" width="3.8" height="5.5" fill="#7d7d7d"/>
<rect x="155.1" y="698.9" width="3.8" height="10.4" fill="#7d7d7d"/>
<rect x="160.4" y="696.0" width="3.8" height="13.3" fill="#7d7d7d"/>
<rect x="165.7" y="703.8" width="3.8" height="5.5" fill="#7d7d7d"/>
<rect x="171.0" y="692.0" width="3.8" height="17.3" fill="#7d7d7d"/>
<rect x="176.3" y="696.0" width="3.8" height="13.3" fill="#7d7d7d"/>
<rect x="181.6" y="703.8" width="3.8" height="5.5" fill="#7d7d7d"/>
<rect x="186.9" y="700.2" width="3.8" height="9.1" fill="#7d7d7d"/>
<rect x="192.2" y="703.8" width="3.8" height="5.5" fill="#7d7d7d"/>
<rect x="197.5" y="702.9" width="3.8" height="6.4" fill="#7d7d7d"/>
<rect x="202.7" y="702.9" width="3.8" height="6.4" fill="#7d7d7d"/>
<rect x="208.0" y="705.3" width="3.8" height="4.0" fill="#7d7d7d"/>
<rect x="213.3" y="702.9" width="3.8" height="6.4" fill="#7d7d7d"/>
<rect x="218.6" y="707.1" width="3.8" height="2.2" fill="#7d7d7d"/>
<rect x="223.9" y="703.8" width="3.8" height="5.5" fill="#7d7d7d"/>
<rect x="229.2" y="706.0" width="3.8" height="3.3" fill="#7d7d7d"/>
<rect x="234.5" y="706.2" width="3.8" height="3.1" fill="#7d7d7d"/>
<rect x="239.8" y="703.8" width="3.8" height="5.5" fill="#7d7d7d"/>
<rect x="245.1" y="704.7" width="3.8" height="4.6" fill="#7d7d7d"/>
<rect x="250.3" y="705.6" width="3.8" height="3.7" fill="#7d7d7d"/>
<rect x="255.6" y="706.0" width="3.8" height="3.3" fill="#7d7d7d"/>
<rect x="260.9" y="703.3" width="3.8" height="6.0" fill="#7d7d7d"/>
<rect x="266.2" y="703.3" width="3.8" height="6.0" fill="#7d7d7d"/>
<rect x="271.5" y="703.8" width="3.8" height="5.5" fill="#7d7d7d"/>
<rect x="276.8" y="704.4" width="3.8" height="4.9" fill="#7d7d7d"/>
<rect x="282.1" y="706.0" width="3.8" height="3.3" fill="#7d7d7d"/>
<rect x="287.4" y="706.0" width="3.8" height="3.3" fill="#7d7d7d"/>
<rect x="292.7" y="706.0" width="3.8" height="3.3" fill="#7d7d7d"/>
<rect x="297.9" y="707.1" width="3.8" height="2.2" fill="#7d7d7d"/>
<rect x="303.2" y="707.8" width="3.8" height="1.5" fill="#7d7d7d"/>
<rect x="308.5" y="706.6" width="3.8" height="2.7" fill="#7d7d7d"/>
<rect x="313.8" y="707.1" width="3.8" height="2.2" fill="#7d7d7d"/>
<rect x="319.1" y="707.1" width="3.8" height="2.2" fill="#7d7d7d"/>
<rect x="324.4" y="704.2" width="3.8" height="5.1" fill="#7d7d7d"/>
<rect x="329.7" y="705.1" width="3.8" height="4.2" fill="#7d7d7d"/>
<rect x="335.0" y="705.6" width="3.8" height="3.7" fill="#7d7d7d"/>
<rect x="340.3" y="704.2" width="3.8" height="5.1" fill="#7d7d7d"/>
<rect x="345.6" y="704.7" width="3.8" height="4.6" fill="#7d7d7d"/>
<rect x="350.8" y="705.1" width="3.8" height="4.2" fill="#7d7d7d"/>
<rect x="356.1" y="703.8" width="3.8" height="5.5" fill="#7d7d7d"/>
<rect x="361.4" y="701.4" width="3.8" height="7.9" fill="#7d7d7d"/>
<rect x="366.7" y="704.2" width="3.8" height="5.1" fill="#7d7d7d"/>
<rect x="372.0" y="705.3" width="3.8" height="4.0" fill="#7d7d7d"/>
<rect x="377.3" y="702.5" width="3.8" height="6.8" fill="#7d7d7d"/>
<rect x="382.6" y="698.9" width="3.8" height="10.4" fill="#7d7d7d"/>
<rect x="387.9" y="703.8" width="3.8" height="5.5" fill="#7d7d7d"/>
<rect x="393.2" y="703.3" width="3.8" height="6.0" fill="#7d7d7d"/>
<rect x="398.4" y="699.3" width="3.8" height="10.0" fill="#7d7d7d"/>
<rect x="403.7" y="681.0" width="3.8" height="28.3" fill="#7d7d7d"/>
<rect x="409.0" y="675.0" width="3.8" height="34.3" fill="#7d7d7d"/>
<rect x="414.3" y="685.9" width="3.8" height="23.4" fill="#7d7d7d"/>
<rect x="419.6" y="701.1" width="3.8" height="8.2" fill="#7d7d7d"/>
<rect x="424.9" y="692.3" width="3.8" height="17.0" fill="#7d7d7d"/>
<rect x="430.2" y="701.1" width="3.8" height="8.2" fill="#7d7d7d"/>
<rect x="435.5" y="682.3" width="3.8" height="27.0" fill="#7d7d7d"/>
<rect x="440.8" y="677.0" width="3.8" height="32.3" fill="#7d7d7d"/>
<rect x="446.0" y="701.6" width="3.8" height="7.7" fill="#7d7d7d"/>
<rect x="451.3" y="702.4" width="3.8" height="6.9" fill="#7d7d7d"/>
<rect x="456.6" y="705.1" width="3.8" height="4.2" fill="#7d7d7d"/>
<rect x="461.9" y="703.5" width="3.8" height="5.8" fill="#7d7d7d"/>
<rect x="467.2" y="701.1" width="3.8" height="8.2" fill="#7d7d7d"/>
<rect x="472.5" y="702.9" width="3.8" height="6.4" fill="#7d7d7d"/>
<rect x="477.8" y="700.7" width="3.8" height="8.6" fill="#7d7d7d"/>
<rect x="483.1" y="702.9" width="3.8" height="6.4" fill="#7d7d7d"/>
<rect x="488.4" y="698.0" width="3.8" height="11.3" fill="#7d7d7d"/>
<rect x="493.6" y="705.1" width="3.8" height="4.2" fill="#7d7d7d"/>
<rect x="498.9" y="705.6" width="3.8" height="3.7" fill="#7d7d7d"/>
<rect x="504.2" y="706.0" width="3.8" height="3.3" fill="#7d7d7d"/>
<rect x="509.5" y="700.2" width="3.8" height="9.1" fill="#7d7d7d"/>
<rect x="514.8" y="700.2" width="3.8" height="9.1" fill="#7d7d7d"/>
<rect x="520.1" y="700.2" width="3.8" height="9.1" fill="#7d7d7d"/>
<rect x="525.4" y="705.1" width="3.8" height="4.2" fill="#7d7d7d"/>
<rect x="530.7" y="706.0" width="3.8" height="3.3" fill="#7d7d7d"/>
<rect x="536.0" y="706.6" width="3.8" height="2.7" fill="#7d7d7d"/>
<rect x="541.2" y="702.4" width="3.8" height="6.9" fill="#7d7d7d"/>
<rect x="546.5" y="698.9" width="3.8" height="10.4" fill="#7d7d7d"/>
<rect x="551.8" y="703.8" width="3.8" height="5.5" fill="#7d7d7d"/>
<rect x="557.1" y="706.0" width="3.8" height="3.3" fill="#7d7d7d"/>
<rect x="562.4" y="704.2" width="3.8" height="5.1" fill="#7d7d7d"/>
<rect x="567.7" y="705.1" width="3.8" height="4.2" fill="#7d7d7d"/>
<rect x="573.0" y="705.6" width="3.8" height="3.7" fill="#7d7d7d"/>
<rect x="578.3" y="705.1" width="3.8" height="4.2" fill="#7d7d7d"/>
<rect x="583.6" y="703.3" width="3.8" height="6.0" fill="#7d7d7d"/>
<rect x="588.8" y="706.9" width="3.8" height="2.4" fill="#7d7d7d"/>
<rect x="594.1" y="703.3" width="3.8" height="6.0" fill="#7d7d7d"/>
<rect x="599.4" y="698.9" width="3.8" height="10.4" fill="#7d7d7d"/>
<rect x="604.7" y="701.1" width="3.8" height="8.2" fill="#7d7d7d"/>
<rect x="610.0" y="695.1" width="3.8" height="14.2" fill="#7d7d7d"/>
<rect x="615.3" y="703.8" width="3.8" height="5.5" fill="#7d7d7d"/>
<rect x="620.6" y="705.1" width="3.8" height="4.2" fill="#7d7d7d"/>
<rect x="625.9" y="703.3" width="3.8" height="6.0" fill="#7d7d7d"/>
<rect x="631.2" y="704.2" width="3.8" height="5.1" fill="#7d7d7d"/>
<rect x="636.4" y="703.8" width="3.8" height="5.5" fill="#7d7d7d"/>
<rect x="641.7" y="701.1" width="3.8" height="8.2" fill="#7d7d7d"/>
<rect x="647.0" y="704.2" width="3.8" height="5.1" fill="#7d7d7d"/>
<rect x="652.3" y="705.3" width="3.8" height="4.0" fill="#7d7d7d"/>
<rect x="657.6" y="705.1" width="3.8" height="4.2" fill="#7d7d7d"/>
<rect x="662.9" y="705.6" width="3.8" height="3.7" fill="#7d7d7d"/>
<rect x="668.2" y="705.1" width="3.8" height="4.2" fill="#7d7d7d"/>
<rect x="673.5" y="706.9" width="3.8" height="2.4" fill="#7d7d7d"/>
<rect x="678.8" y="706.6" width="3.8" height="2.7" fill="#7d7d7d"/>
<rect x="684.0" y="705.1" width="3.8" height="4.2" fill="#7d7d7d"/>
<rect x="689.3" y="704.2" width="3.8" height="5.1" fill="#7d7d7d"/>
<rect x="694.6" y="698.9" width="3.8" height="10.4" fill="#7d7d7d"/>
<rect x="699.9" y="705.1" width="3.8" height="4.2" fill="#7d7d7d"/>
<rect x="705.2" y="703.3" width="3.8" height="6.0" fill="#7d7d7d"/>
<rect x="710.5" y="702.5" width="3.8" height="6.8" fill="#7d7d7d"/>
<rect x="715.8" y="706.2" width="3.8" height="3.1" fill="#7d7d7d"/>
<rect x="721.1" y="706.6" width="3.8" height="2.7" fill="#7d7d7d"/>
<rect x="726.4" y="705.1" width="3.8" height="4.2" fill="#7d7d7d"/>
<rect x="731.6" y="679.2" width="3.8" height="30.1" fill="#7d7d7d"/>
<rect x="736.9" y="687.9" width="3.8" height="21.4" fill="#7d7d7d"/>
<rect x="742.2" y="703.3" width="3.8" height="6.0" fill="#7d7d7d"/>
<rect x="747.5" y="702.4" width="3.8" height="6.9" fill="#7d7d7d"/>
<rect x="752.8" y="703.3" width="3.8" height="6.0" fill="#7d7d7d"/>
<rect x="758.1" y="695.2" width="3.8" height="14.1" fill="#7d7d7d"/>
<rect x="763.4" y="704.7" width="3.8" height="4.6" fill="#7d7d7d"/>
<rect x="768.7" y="703.8" width="3.8" height="5.5" fill="#7d7d7d"/>
<rect x="774.0" y="696.5" width="3.8" height="12.8" fill="#7d7d7d"/>
<rect x="779.2" y="704.2" width="3.8" height="5.1" fill="#7d7d7d"/>
<rect x="784.5" y="704.2" width="3.8" height="5.1" fill="#7d7d7d"/>
<rect x="789.8" y="706.2" width="3.8" height="3.1" fill="#7d7d7d"/>
<rect x="795.1" y="706.2" width="3.8" height="3.1" fill="#7d7d7d"/>
<rect x="800.4" y="705.1" width="3.8" height="4.2" fill="#7d7d7d"/>
<rect x="805.7" y="697.1" width="3.8" height="12.2" fill="#7d7d7d"/>
<rect x="811.0" y="707.1" width="3.8" height="2.2" fill="#7d7d7d"/>
<rect x="816.3" y="703.3" width="3.8" height="6.0" fill="#7d7d7d"/>
<rect x="821.6" y="708.0" width="3.8" height="1.3" fill="#7d7d7d"/>
<rect x="826.8" y="704.4" width="3.8" height="4.9" fill="#7d7d7d"/>
<rect x="832.1" y="706.2" width="3.8" height="3.1" fill="#7d7d7d"/>
<rect x="837.4" y="702.4" width="3.8" height="6.9" fill="#7d7d7d"/>
<rect x="842.7" y="707.1" width="3.8" height="2.2" fill="#7d7d7d"/>
<rect x="848.0" y="707.1" width="3.8" height="2.2" fill="#7d7d7d"/>
<rect x="853.3" y="701.1" width="3.8" height="8.2" fill="#7d7d7d"/>
<rect x="858.6" y="705.1" width="3.8" height="4.2" fill="#7d7d7d"/>
<rect x="863.9" y="706.2" width="3.8" height="3.1" fill="#7d7d7d"/>
<rect x="869.2" y="706.0" width="3.8" height="3.3" fill="#7d7d7d"/>
<rect x="874.4" y="706.2" width="3.8" height="3.1" fill="#7d7d7d"/>
<rect x="879.7" y="707.1" width="3.8" height="2.2" fill="#7d7d7d"/>
<rect x="885.0" y="705.1" width="3.8" height="4.2" fill="#7d7d7d"/>
<rect x="890.3" y="707.1" width="3.8" height="2.2" fill="#7d7d7d"/>
<rect x="895.6" y="703.3" width="3.8" height="6.0" fill="#7d7d7d"/>
<rect x="900.9" y="706.0" width="3.8" height="3.3" fill="#7d7d7d"/>
<rect x="906.2" y="707.8" width="3.8" height="1.5" fill="#7d7d7d"/>
<rect x="911.5" y="707.5" width="3.8" height="1.8" fill="#7d7d7d"/>
<rect x="916.8" y="706.0" width="3.8" height="3.3" fill="#7d7d7d"/>
<rect x="922.1" y="707.8" width="3.8" height="1.5" fill="#7d7d7d"/>
<rect x="927.3" y="706.2" width="3.8" height="3.1" fill="#7d7d7d"/>
<rect x="932.6" y="706.2" width="3.8" height="3.1" fill="#7d7d7d"/>
<rect x="937.9" y="705.3" width="3.8" height="4.0" fill="#7d7d7d"/>
<rect x="943.2" y="683.2" width="3.8" height="26.1" fill="#7d7d7d"/>
<rect x="948.5" y="705.6" width="3.8" height="3.7" fill="#7d7d7d"/>
<rect x="953.8" y="702.4" width="3.8" height="6.9" fill="#7d7d7d"/>
<rect x="959.1" y="706.0" width="3.8" height="3.3" fill="#7d7d7d"/>
<rect x="964.4" y="707.8" width="3.8" height="1.5" fill="#7d7d7d"/>
<rect x="969.7" y="701.1" width="3.8" height="8.2" fill="#7d7d7d"/>
<rect x="974.9" y="704.7" width="3.8" height="4.6" fill="#7d7d7d"/>
<rect x="980.2" y="706.0" width="3.8" height="3.3" fill="#7d7d7d"/>
<rect x="985.5" y="707.1" width="3.8" height="2.2" fill="#7d7d7d"/>
<rect x="990.8" y="707.8" width="3.8" height="1.5" fill="#7d7d7d"/>
<rect x="996.1" y="703.8" width="3.8" height="5.5" fill="#7d7d7d"/>
<rect x="1001.4" y="706.0" width="3.8" height="3.3" fill="#7d7d7d"/>
<rect x="1006.7" y="703.3" width="3.8" height="6.0" fill="#7d7d7d"/>
<rect x="1012.0" y="706.0" width="3.8" height="3.3" fill="#7d7d7d"/>
<rect x="1017.3" y="700.2" width="3.8" height="9.1" fill="#7d7d7d"/>
<rect x="1022.5" y="704.2" width="3.8" height="5.1" fill="#7d7d7d"/>
<rect x="1027.8" y="705.3" width="3.8" height="4.0" fill="#7d7d7d"/>
<rect x="1033.1" y="707.5" width="3.8" height="1.8" fill="#7d7d7d"/>
<rect x="1038.4" y="706.2" width="3.8" height="3.1" fill="#7d7d7d"/>
<rect x="1043.7" y="707.8" width="3.8" height="1.5" fill="#7d7d7d"/>
<rect x="1049.0" y="707.8" width="3.8" height="1.5" fill="#7d7d7d"/>
<rect x="1054.3" y="703.8" width="3.8" height="5.5" fill="#7d7d7d"/>
<rect x="1059.6" y="703.8" width="3.8" height="5.5" fill="#7d7d7d"/>
<rect x="1064.9" y="703.8" width="3.8" height="5.5" fill="#7d7d7d"/>
<rect x="1070.1" y="707.8" width="3.8" height="1.5" fill="#7d7d7d"/>
<rect x="1075.4" y="707.1" width="3.8" height="2.2" fill="#7d7d7d"/>
<rect x="1080.7" y="704.7" width="3.8" height="4.6" fill="#7d7d7d"/>
<rect x="1086.0" y="707.1" width="3.8" height="2.2" fill="#7d7d7d"/>
<rect x="1091.3" y="703.8" width="3.8" height="5.5" fill="#7d7d7d"/>
<rect x="1096.6" y="704.7" width="3.8" height="4.6" fill="#7d7d7d"/>
<rect x="1101.9" y="705.3" width="3.8" height="4.0" fill="#7d7d7d"/>
<rect x="1107.2" y="708.2" width="3.8" height="1.1" fill="#7d7d7d"/>
<rect x="1112.5" y="707.6" width="3.8" height="1.7" fill="#7d7d7d"/>
<rect x="1117.7" y="707.6" width="3.8" height="1.7" fill="#7d7d7d"/>
<rect x="1123.0" y="705.4" width="3.8" height="3.9" fill="#7d7d7d"/>
<rect x="1128.3" y="707.1" width="3.8" height="2.2" fill="#7d7d7d"/>
<rect x="1133.6" y="707.6" width="3.8" height="1.7" fill="#7d7d7d"/>
<rect x="1138.9" y="706.9" width="3.8" height="2.4" fill="#7d7d7d"/>
<rect x="1144.2" y="708.0" width="3.8" height="1.3" fill="#7d7d7d"/>
<rect x="1149.5" y="706.5" width="3.8" height="2.8" fill="#7d7d7d"/>
<rect x="1154.8" y="707.1" width="3.8" height="2.2" fill="#7d7d7d"/>
<rect x="1160.1" y="707.6" width="3.8" height="1.7" fill="#7d7d7d"/>
<rect x="1165.3" y="708.0" width="3.8" height="1.3" fill="#7d7d7d"/>
<rect x="1170.6" y="703.6" width="3.8" height="5.7" fill="#7d7d7d"/>
<rect x="1175.9" y="707.1" width="3.8" height="2.2" fill="#7d7d7d"/>
<rect x="1181.2" y="708.2" width="3.8" height="1.1" fill="#7d7d7d"/>
<rect x="1186.5" y="708.2" width="3.8" height="1.1" fill="#7d7d7d"/>
<rect x="1191.8" y="703.6" width="3.8" height="5.7" fill="#7d7d7d"/>
<rect x="1197.1" y="706.9" width="3.8" height="2.4" fill="#7d7d7d"/>
<rect x="1202.4" y="706.5" width="3.8" height="2.8" fill="#7d7d7d"/>
<rect x="1207.7" y="706.5" width="3.8" height="2.8" fill="#7d7d7d"/>
<rect x="1212.9" y="704.7" width="3.8" height="4.6" fill="#7d7d7d"/>
<rect x="1218.2" y="705.8" width="3.8" height="3.5" fill="#7d7d7d"/>
<rect x="1223.5" y="707.1" width="3.8" height="2.2" fill="#7d7d7d"/>
<rect x="1228.8" y="705.4" width="3.8" height="3.9" fill="#7d7d7d"/>
<rect x="1234.1" y="706.7" width="3.8" height="2.6" fill="#7d7d7d"/>
<rect x="1239.4" y="708.0" width="3.8" height="1.3" fill="#7d7d7d"/>
<rect x="1244.7" y="706.9" width="3.8" height="2.4" fill="#7d7d7d"/>
<rect x="1250.0" y="707.6" width="3.8" height="1.7" fill="#7d7d7d"/>
<rect x="1255.3" y="706.9" width="3.8" height="2.4" fill="#7d7d7d"/>
<rect x="1260.5" y="707.6" width="3.8" height="1.7" fill="#7d7d7d"/>
<rect x="1265.8" y="708.2" width="3.8" height="1.1" fill="#7d7d7d"/>
<rect x="1271.1" y="708.2" width="3.8" height="1.1" fill="#7d7d7d"/>
<rect x="1276.4" y="707.1" width="3.8" height="2.2" fill="#7d7d7d"/>
<rect x="1281.7" y="707.6" width="3.8" height="1.7" fill="#7d7d7d"/>
<rect x="1287.0" y="708.2" width="3.8" height="1.1" fill="#7d7d7d"/>
<rect x="1292.3" y="708.2" width="3.8" height="1.1" fill="#7d7d7d"/>
<rect x="1297.6" y="709.3" width="3.8" height="0.0" fill="#7d7d7d"/>
<rect x="1302.9" y="698.9" width="3.8" height="10.4" fill="#7d7d7d"/>
<rect x="1308.1" y="700.6" width="3.8" height="8.7" fill="#7d7d7d"/>
<rect x="1313.4" y="703.6" width="3.8" height="5.7" fill="#7d7d7d"/>
<rect x="1318.7" y="675.6" width="3.8" height="33.7" fill="#7d7d7d"/>
<rect x="1324.0" y="666.9" width="3.8" height="42.4" fill="#7d7d7d"/>
<rect x="1329.3" y="675.6" width="3.8" height="33.7" fill="#7d7d7d"/>
<rect x="1334.6" y="672.7" width="3.8" height="36.6" fill="#7d7d7d"/>
<rect x="1339.9" y="673.2" width="3.8" height="36.1" fill="#7d7d7d"/>
<rect x="1345.2" y="697.3" width="3.8" height="12.0" fill="#7d7d7d"/>
<rect x="1350.5" y="700.4" width="3.8" height="8.9" fill="#7d7d7d"/>
<rect x="1355.7" y="699.5" width="3.8" height="9.8" fill="#7d7d7d"/>
<rect x="1361.0" y="696.7" width="3.8" height="12.6" fill="#7d7d7d"/>
<rect x="1366.3" y="704.3" width="3.8" height="5.0" fill="#7d7d7d"/>
<rect x="1371.6" y="703.2" width="3.8" height="6.1" fill="#7d7d7d"/>
<rect x="1376.9" y="701.0" width="3.8" height="8.3" fill="#7d7d7d"/>
<rect x="1382.2" y="702.1" width="3.8" height="7.2" fill="#7d7d7d"/>
<rect x="1387.5" y="702.8" width="3.8" height="6.5" fill="#7d7d7d"/>
<line x1="81" y1="709.5" x2="1407" y2="709.5" stroke="#c9c9dc" stroke-width="1"/>
<polyline points="82.4,753.5 87.7,756.0 93.0,754.2 98.3,758.4 103.6,751.1 108.9,749.3 114.2,752.0 119.5,748.7 124.8,746.2 130.1,745.6 135.4,742.0 140.7,740.1 146.0,745.1 151.2,750.5 156.5,745.1 161.8,739.6 167.1,744.3 172.4,737.0 177.7,752.0 183.0,758.4 188.3,763.9 193.6,758.9 198.9,764.4 204.2,762.6 209.5,757.8 214.8,753.5 220.1,757.5 225.4,751.6 230.7,752.4 236.0,752.9 241.3,756.0 246.6,754.7 251.9,757.8 257.2,757.5 262.5,756.0 267.8,754.4 273.1,749.8 278.4,759.3 283.6,758.4 288.9,763.3 294.2,761.1 299.5,758.4 304.8,756.0 310.1,758.4 315.4,758.9 320.7,757.5 326.0,762.6 331.3,767.5 336.6,768.8 341.9,771.2 347.2,768.4 352.5,759.3 357.8,761.1 363.1,755.3 368.4,754.9 373.7,752.9 379.0,748.7 384.3,742.0 389.6,746.9 394.9,742.0 400.2,739.2 405.5,731.9 410.8,724.6 416.0,724.6 421.3,725.0 426.6,722.8 431.9,721.9 437.2,719.1 442.5,740.1 447.8,738.3 453.1,742.3 458.4,741.0 463.7,745.6 469.0,753.5 474.3,752.5 479.6,758.4 484.9,762.0 490.2,759.3 495.5,756.0 500.8,753.8 506.1,757.1 511.4,749.8 516.7,749.3 522.0,750.5 527.3,751.1 532.6,748.9 537.9,748.7 543.2,742.3 548.4,741.0 553.7,746.5 559.0,747.8 564.3,747.8 569.6,753.5 574.9,755.1 580.2,752.4 585.5,747.8 590.8,745.1 596.1,743.8 601.4,743.8 606.7,738.8 612.0,737.0 617.3,750.5 622.6,752.9 627.9,761.1 633.2,762.9 638.5,758.4 643.8,760.6 649.1,761.1 654.4,756.0 659.7,757.8 665.0,763.9 670.3,763.9 675.6,761.5 680.8,755.1 686.1,753.5 691.4,746.2 696.7,747.1 702.0,746.2 707.3,761.1 712.6,763.5 717.9,764.2 723.2,758.4 728.5,748.3 733.8,733.7 739.1,756.2 744.4,753.8 749.7,759.7 755.0,762.0 760.3,765.3 765.6,764.4 770.9,768.4 776.2,769.3 781.5,770.6 786.8,766.2 792.1,764.8 797.4,768.1 802.7,770.3 808.0,770.8 813.2,769.9 818.5,768.1 823.8,769.9 829.1,767.0 834.4,767.0 839.7,762.0 845.0,765.1 850.3,762.7 855.6,760.2 860.9,757.8 866.2,763.3 871.5,764.8 876.8,764.4 882.1,768.1 887.4,768.1 892.7,763.9 898.0,756.6 903.3,761.7 908.6,761.7 913.9,763.3 919.2,765.7 924.5,762.9 929.8,757.1 935.1,757.8 940.4,752.4 945.6,744.3 950.9,743.2 956.2,740.1 961.5,746.9 966.8,743.8 972.1,737.8 977.4,748.3 982.7,751.4 988.0,749.3 993.3,745.6 998.6,744.3 1003.9,738.7 1009.2,748.7 1014.5,743.8 1019.8,738.7 1025.1,747.4 1030.4,755.6 1035.7,755.6 1041.0,753.8 1046.3,753.3 1051.6,752.9 1056.9,758.4 1062.2,763.3 1067.5,764.4 1072.8,761.7 1078.0,766.6 1083.3,767.5 1088.6,767.0 1093.9,769.9 1099.2,771.7 1104.5,764.4 1109.8,768.3 1115.1,759.0 1120.4,759.0 1125.7,755.7 1131.0,757.2 1136.3,762.2 1141.6,766.6 1146.9,766.6 1152.2,761.8 1157.5,758.3 1162.8,757.9 1168.1,753.5 1173.4,764.0 1178.7,764.4 1184.0,761.8 1189.3,756.8 1194.6,749.6 1199.9,745.5 1205.2,754.2 1210.4,751.8 1215.7,748.1 1221.0,745.9 1226.3,745.3 1231.6,749.6 1236.9,745.9 1242.2,747.0 1247.5,756.1 1252.8,757.2 1258.1,767.0 1263.4,762.9 1268.7,759.0 1274.0,755.7 1279.3,760.5 1284.6,755.7 1289.9,755.7 1295.2,759.0 1300.5,758.3 1305.8,744.2 1311.1,742.2 1316.4,738.3 1321.7,725.9 1327.0,724.1 1332.3,721.3 1337.6,717.2 1342.8,722.6 1348.1,728.1 1353.4,733.5 1358.7,733.5 1364.0,730.7 1369.3,733.9 1374.6,741.6 1379.9,743.1 1385.2,743.1 1390.5,747.7" fill="none" stroke="#d4168f" stroke-width="2" stroke-linejoin="round" stroke-linecap="round"/>
<line x1="81" y1="772.5" x2="1407" y2="772.5" stroke="#c9c9dc" stroke-width="1"/>
<text x="72.5" y="729.9000000000001" text-anchor="end" class="lbl">80</text>
<text x="72.5" y="740.8000000000001" text-anchor="end" class="lbl">70</text>
<text x="72.5" y="753.0" text-anchor="end" class="lbl">60</text>
<text x="72.5" y="764.0" text-anchor="end" class="lbl">50</text>
<text transform="translate(24,681) rotate(-90)" text-anchor="middle" class="lbl">Volume</text>
<text transform="translate(23,743.5) rotate(-90)" text-anchor="middle" class="lbl">RSI</text>
<rect x="1238.5" y="789" width="170" height="29" fill="#29303a"/>
<path d="M85.3,796.9 L87.4,797.1 L89.5,796.9 L91.5,797.0 L93.6,797.0 L95.7,796.5 L97.7,796.3 L99.8,796.9 L101.8,796.4 L103.9,796.3 L106.0,796.9 L108.0,796.4 L110.1,796.6 L112.2,796.2 L114.2,796.3 L116.3,795.8 L118.4,796.2 L120.4,796.3 L122.5,795.9 L124.5,796.0 L126.6,795.9 L128.7,795.4 L130.7,795.9 L132.8,795.7 L134.9,795.4 L136.9,795.1 L139.0,795.7 L141.1,795.3 L143.1,795.4 L145.2,795.5 L147.2,795.3 L149.3,795.5 L151.3,795.1 L153.4,795.5 L155.4,795.3 L157.4,795.7 L159.5,795.7 L161.5,795.1 L163.5,795.2 L165.6,795.3 L167.6,796.0 L169.6,795.6 L171.7,795.8 L173.7,795.6 L175.8,795.8 L177.8,795.7 L179.8,795.7 L181.9,796.0 L183.9,796.0 L185.9,796.3 L188.0,796.2 L190.0,796.4 L192.1,796.4 L194.1,796.6 L196.1,796.4 L198.2,796.0 L200.2,796.6 L202.2,796.7 L204.3,796.6 L206.3,796.3 L208.3,796.4 L210.4,796.0 L212.4,796.5 L214.5,796.2 L216.5,796.0 L218.5,795.8 L220.6,796.4 L222.6,796.5 L224.6,795.8 L226.7,796.3 L228.7,796.0 L230.7,795.7 L232.8,795.8 L234.8,796.2 L236.9,796.3 L238.9,795.6 L240.9,796.0 L243.0,795.5 L245.0,796.1 L247.0,795.7 L249.1,796.1 L251.1,796.2 L253.2,795.8 L255.2,796.2 L257.2,795.6 L259.3,795.4 L261.3,795.8 L263.3,795.3 L265.4,795.4 L267.4,795.6 L269.4,795.7 L271.5,795.3 L273.5,795.2 L275.6,795.9 L277.6,795.4 L279.6,795.9 L281.7,795.8 L283.7,795.5 L285.7,795.6 L287.8,795.7 L289.8,795.9 L291.8,795.9 L293.9,796.0 L295.9,796.1 L298.0,796.4 L300.0,796.1 L302.0,796.1 L304.1,796.4 L306.1,796.1 L308.1,796.4 L310.2,797.1 L312.2,797.0 L314.3,797.2 L316.3,797.0 L318.3,797.5 L320.4,797.6 L322.4,797.1 L324.4,797.5 L326.5,797.5 L328.5,797.0 L330.5,797.4 L332.6,797.2 L334.6,797.4 L336.7,797.1 L338.7,797.3 L340.7,797.6 L342.8,797.3 L344.8,797.6 L346.8,798.3 L348.9,798.8 L350.9,798.5 L352.9,798.9 L355.0,799.3 L357.0,799.0 L359.1,799.0 L361.1,799.0 L363.1,799.0 L365.2,799.2 L367.2,798.9 L369.2,799.0 L371.3,799.3 L373.3,798.7 L375.4,799.1 L377.4,799.2 L379.4,798.8 L381.5,798.7 L383.5,799.2 L385.5,798.7 L387.6,798.7 L389.6,798.8 L391.6,799.0 L393.7,798.5 L395.7,798.7 L397.8,798.7 L399.8,799.1 L401.8,798.7 L403.9,799.1 L405.9,798.5 L407.9,798.6 L410.0,798.8 L412.0,798.9 L414.0,798.6 L416.1,798.4 L418.1,798.2 L420.2,798.5 L422.2,798.2 L424.2,798.7 L426.3,798.7 L428.3,798.1 L430.3,798.7 L432.4,799.6 L434.4,800.0 L436.5,800.6 L438.5,799.7 L440.5,798.9 L442.6,798.4 L444.6,798.2 L446.6,797.8 L448.7,797.8 L450.7,797.9 L452.7,797.9 L454.8,797.9 L456.8,798.3 L458.9,797.7 L460.9,797.6 L462.9,798.3 L465.0,798.3 L467.0,798.3 L469.0,797.9 L471.1,798.3 L473.1,798.3 L475.1,797.7 L477.2,798.2 L479.2,798.2 L481.3,798.1 L483.3,798.0 L485.3,797.8 L487.4,797.6 L489.4,797.3 L491.4,797.0 L493.5,797.2 L495.5,796.8 L497.6,797.0 L499.6,796.2 L501.6,796.7 L503.7,796.3 L505.7,796.3 L507.7,796.1 L509.8,796.0 L511.8,795.6 L513.8,795.0 L515.9,795.5 L517.9,794.9 L520.0,794.9 L522.0,795.1 L524.0,794.8 L526.1,794.6 L528.1,795.3 L530.1,795.3 L532.2,795.4 L534.2,795.6 L536.2,796.3 L538.3,796.3 L540.3,796.6 L542.4,796.2 L544.4,796.1 L546.4,796.4 L548.5,796.7 L550.5,796.2 L552.5,796.7 L554.6,796.8 L556.6,796.7 L558.7,796.8 L560.7,796.1 L562.7,796.7 L564.8,796.9 L566.8,796.2 L568.8,796.4 L570.9,796.4 L572.9,796.7 L574.9,796.6 L577.0,796.7 L579.0,796.9 L581.1,796.3 L583.1,796.4 L585.1,797.0 L587.2,797.5 L589.2,798.0 L591.2,799.3 L593.3,799.7 L595.3,799.7 L597.3,800.1 L599.4,800.1 L601.4,800.2 L603.5,800.4 L605.5,800.7 L607.5,800.8 L609.6,800.7 L611.6,800.7 L613.6,801.0 L615.7,800.9 L617.7,801.4 L619.8,801.6 L621.8,801.4 L623.8,801.3 L625.9,801.5 L627.9,801.7 L629.9,802.0 L632.0,802.3 L634.0,802.0 L636.0,802.5 L638.1,802.4 L640.1,802.4 L642.6,802.8 L645.1,803.3 L647.5,803.8 L650.0,804.0 L652.0,804.2 L654.0,804.1 L656.0,803.9 L658.0,804.1 L660.1,804.2 L662.2,803.7 L664.3,804.0 L666.4,803.9 L668.5,804.3 L670.5,804.3 L672.6,803.8 L674.7,804.2 L676.8,804.1 L678.9,803.7 L680.9,803.8 L683.0,803.6 L685.1,804.1 L687.2,804.0 L689.3,804.1 L691.4,804.0 L693.4,803.9 L695.5,803.9 L697.6,803.8 L699.7,803.4 L701.8,803.8 L703.9,803.3 L705.9,803.3 L708.0,803.8 L710.1,803.1 L712.1,803.1 L714.2,803.0 L716.3,803.6 L718.4,803.1 L720.4,803.1 L722.5,803.8 L724.6,803.3 L726.6,804.0 L728.7,804.0 L730.8,804.2 L732.9,804.4 L734.9,804.2 L737.0,804.4 L739.1,803.9 L741.1,804.6 L743.2,804.5 L745.3,804.7 L747.3,804.3 L749.4,804.9 L751.5,805.2 L753.6,804.6 L755.6,804.9 L757.7,805.1 L759.8,805.4 L761.8,805.1 L763.9,805.1 L766.0,805.2 L768.1,805.6 L770.1,805.8 L772.2,805.6 L774.3,805.6 L776.3,806.8 L778.4,807.9 L780.5,809.1 L782.6,810.0 L784.6,810.8 L786.7,811.7 L788.8,811.8 L790.8,812.6 L792.9,812.0 L795.0,812.2 L797.1,812.1 L799.1,811.9 L801.2,811.6 L803.3,811.4 L805.3,811.4 L807.4,811.5 L809.5,810.7 L811.6,810.5 L813.6,810.9 L815.7,810.9 L817.8,810.4 L819.8,810.2 L821.9,810.2 L824.0,809.6 L826.1,809.8 L828.1,809.9 L830.2,810.4 L832.3,810.3 L834.3,810.3 L836.4,810.8 L838.5,811.2 L840.6,810.8 L842.6,811.2 L844.7,811.1 L846.8,811.6 L848.8,811.5 L850.9,811.4 L853.0,811.5 L855.1,811.5 L857.1,812.0 L859.2,811.3 L861.3,810.5 L863.3,810.0 L865.4,809.3 L867.5,809.1 L869.6,808.0 L871.6,808.0 L873.7,807.0 L875.8,808.3 L877.8,809.5 L879.9,811.0 L882.0,812.2 L884.1,811.8 L886.1,811.6 L888.2,811.6 L890.3,811.5 L892.3,811.0 L894.4,811.1 L896.5,811.1 L898.6,810.5 L900.6,810.1 L902.7,809.9 L904.8,810.1 L906.8,809.9 L908.9,810.0 L911.0,809.7 L913.0,809.0 L915.1,808.8 L917.2,809.1 L919.3,809.3 L921.3,810.0 L923.4,810.4 L925.5,810.7 L927.5,810.4 L929.6,811.2 L931.7,811.0 L933.7,811.1 L935.7,811.3 L937.7,810.7 L939.8,810.7 L941.8,811.3 L943.8,810.8 L945.8,810.9 L947.8,811.0 L949.8,811.1 L951.8,810.5 L953.9,810.8 L955.9,810.8 L957.9,810.8 L959.9,810.6 L961.9,810.9 L963.9,811.1 L965.9,810.7 L968.0,810.8 L970.0,810.4 L972.0,810.5 L974.0,810.8 L976.0,810.3 L978.0,810.9 L980.1,810.9 L982.1,810.3 L984.1,810.9 L986.1,810.4 L988.1,810.7 L990.1,810.7 L992.1,810.3 L994.2,810.6 L996.2,810.5 L998.2,810.6 L1000.2,810.2 L1002.2,810.6 L1004.2,810.7 L1006.3,810.4 L1008.3,810.1 L1010.4,809.5 L1012.5,809.6 L1014.5,809.2 L1016.6,809.3 L1018.7,809.0 L1020.8,808.7 L1022.8,808.1 L1024.9,808.3 L1027.0,808.0 L1029.0,807.4 L1031.1,807.7 L1033.2,807.5 L1035.3,807.1 L1037.3,807.7 L1039.4,807.0 L1041.5,807.1 L1043.5,807.4 L1045.6,807.3 L1047.7,807.2 L1049.8,807.3 L1051.8,807.1 L1053.9,807.0 L1056.0,806.8 L1058.0,806.7 L1060.1,807.2 L1062.2,807.2 L1064.3,807.0 L1066.3,807.2 L1068.3,806.8 L1070.3,806.7 L1072.3,806.8 L1074.4,807.1 L1076.4,806.4 L1078.4,806.8 L1080.4,806.6 L1082.4,806.9 L1084.5,806.6 L1086.5,806.5 L1088.5,806.6 L1090.5,806.6 L1092.5,806.8 L1094.6,806.4 L1096.6,806.8 L1098.6,806.2 L1100.6,806.3 L1102.6,806.1 L1104.7,806.1 L1106.7,806.6 L1108.7,806.5 L1110.7,806.0 L1112.7,806.0 L1114.8,806.2 L1116.8,806.4 L1118.8,806.4 L1120.8,806.3 L1122.9,806.2 L1124.9,805.8 L1126.9,806.0 L1128.9,805.8 L1130.9,806.0 L1133.0,806.0 L1135.0,805.7 L1137.0,805.7 L1139.0,806.1 L1141.0,805.5 L1143.1,806.1 L1145.1,806.1 L1147.1,806.1 L1149.2,805.7 L1151.2,805.9 L1153.3,806.0 L1155.4,806.1 L1157.5,806.4 L1159.5,806.3 L1161.6,806.0 L1163.7,806.5 L1165.7,806.3 L1167.8,806.5 L1169.9,806.6 L1172.0,806.1 L1174.0,806.8 L1176.1,806.8 L1178.2,806.7 L1180.2,806.8 L1182.3,806.8 L1184.4,806.6 L1186.5,807.0 L1188.5,806.6 L1190.8,807.0 L1193.1,807.1 L1195.4,806.9 L1197.7,807.0 L1200.0,807.3 L1202.2,807.2 L1204.5,806.5 L1206.7,807.0 L1209.0,806.8 L1211.2,806.3 L1213.5,806.5 L1215.7,806.3 L1217.5,807.5 L1220.4,803.1 L1221.7,804.0 L1223.8,802.4 L1226.0,801.8 L1230.0,802.2 L1232.1,801.6 L1234.3,802.0 L1236.5,801.7 L1236.5,817.5 L85.3,817.5 Z" fill="#26262d"/>
<path d="M1238.7,801.8 L1240.9,801.5 L1243.1,801.4 L1245.3,801.0 L1247.5,801.2 L1249.7,801.2 L1251.9,801.0 L1254.1,800.7 L1256.2,801.0 L1258.3,800.8 L1260.5,800.5 L1262.6,800.5 L1264.8,800.6 L1266.9,800.7 L1269.1,800.7 L1271.2,801.1 L1273.4,801.3 L1275.5,801.2 L1277.6,800.1 L1279.7,799.4 L1281.8,798.2 L1283.9,798.3 L1286.0,798.5 L1288.1,798.2 L1290.2,798.1 L1292.3,798.6 L1294.4,798.5 L1296.6,798.2 L1298.9,798.1 L1301.1,798.2 L1303.4,798.2 L1305.6,797.9 L1307.9,797.6 L1310.1,797.8 L1312.1,798.0 L1314.2,797.4 L1316.2,797.4 L1318.2,797.0 L1320.2,796.9 L1322.2,796.7 L1324.3,796.7 L1326.4,797.0 L1328.5,797.4 L1330.6,798.0 L1332.7,798.0 L1334.8,798.3 L1336.9,798.0 L1339.0,797.9 L1341.1,798.3 L1343.1,798.2 L1345.2,798.5 L1347.3,798.0 L1349.4,798.2 L1352.1,797.8 L1354.7,797.1 L1357.3,797.4 L1359.4,796.8 L1361.5,796.7 L1363.6,797.0 L1365.7,796.8 L1367.8,797.2 L1369.9,796.9 L1372.0,796.8 L1374.1,796.7 L1376.2,797.2 L1378.3,796.9 L1380.4,797.3 L1382.5,797.0 L1384.6,797.4 L1386.7,796.9 L1388.8,796.9 L1391.0,796.9 L1393.3,797.3 L1395.5,797.2 L1397.8,796.9 L1400.0,796.7 L1402.3,797.2 L1404.5,797.1 L1404.5,817.5 L1238.7,817.5 Z" fill="#3c4756"/>
<polyline points="85.3,796.9 87.4,797.1 89.5,796.9 91.5,797.0 93.6,797.0 95.7,796.5 97.7,796.3 99.8,796.9 101.8,796.4 103.9,796.3 106.0,796.9 108.0,796.4 110.1,796.6 112.2,796.2 114.2,796.3 116.3,795.8 118.4,796.2 120.4,796.3 122.5,795.9 124.5,796.0 126.6,795.9 128.7,795.4 130.7,795.9 132.8,795.7 134.9,795.4 136.9,795.1 139.0,795.7 141.1,795.3 143.1,795.4 145.2,795.5 147.2,795.3 149.3,795.5 151.3,795.1 153.4,795.5 155.4,795.3 157.4,795.7 159.5,795.7 161.5,795.1 163.5,795.2 165.6,795.3 167.6,796.0 169.6,795.6 171.7,795.8 173.7,795.6 175.8,795.8 177.8,795.7 179.8,795.7 181.9,796.0 183.9,796.0 185.9,796.3 188.0,796.2 190.0,796.4 192.1,796.4 194.1,796.6 196.1,796.4 198.2,796.0 200.2,796.6 202.2,796.7 204.3,796.6 206.3,796.3 208.3,796.4 210.4,796.0 212.4,796.5 214.5,796.2 216.5,796.0 218.5,795.8 220.6,796.4 222.6,796.5 224.6,795.8 226.7,796.3 228.7,796.0 230.7,795.7 232.8,795.8 234.8,796.2 236.9,796.3 238.9,795.6 240.9,796.0 243.0,795.5 245.0,796.1 247.0,795.7 249.1,796.1 251.1,796.2 253.2,795.8 255.2,796.2 257.2,795.6 259.3,795.4 261.3,795.8 263.3,795.3 265.4,795.4 267.4,795.6 269.4,795.7 271.5,795.3 273.5,795.2 275.6,795.9 277.6,795.4 279.6,795.9 281.7,795.8 283.7,795.5 285.7,795.6 287.8,795.7 289.8,795.9 291.8,795.9 293.9,796.0 295.9,796.1 298.0,796.4 300.0,796.1 302.0,796.1 304.1,796.4 306.1,796.1 308.1,796.4 310.2,797.1 312.2,797.0 314.3,797.2 316.3,797.0 318.3,797.5 320.4,797.6 322.4,797.1 324.4,797.5 326.5,797.5 328.5,797.0 330.5,797.4 332.6,797.2 334.6,797.4 336.7,797.1 338.7,797.3 340.7,797.6 342.8,797.3 344.8,797.6 346.8,798.3 348.9,798.8 350.9,798.5 352.9,798.9 355.0,799.3 357.0,799.0 359.1,799.0 361.1,799.0 363.1,799.0 365.2,799.2 367.2,798.9 369.2,799.0 371.3,799.3 373.3,798.7 375.4,799.1 377.4,799.2 379.4,798.8 381.5,798.7 383.5,799.2 385.5,798.7 387.6,798.7 389.6,798.8 391.6,799.0 393.7,798.5 395.7,798.7 397.8,798.7 399.8,799.1 401.8,798.7 403.9,799.1 405.9,798.5 407.9,798.6 410.0,798.8 412.0,798.9 414.0,798.6 416.1,798.4 418.1,798.2 420.2,798.5 422.2,798.2 424.2,798.7 426.3,798.7 428.3,798.1 430.3,798.7 432.4,799.6 434.4,800.0 436.5,800.6 438.5,799.7 440.5,798.9 442.6,798.4 444.6,798.2 446.6,797.8 448.7,797.8 450.7,797.9 452.7,797.9 454.8,797.9 456.8,798.3 458.9,797.7 460.9,797.6 462.9,798.3 465.0,798.3 467.0,798.3 469.0,797.9 471.1,798.3 473.1,798.3 475.1,797.7 477.2,798.2 479.2,798.2 481.3,798.1 483.3,798.0 485.3,797.8 487.4,797.6 489.4,797.3 491.4,797.0 493.5,797.2 495.5,796.8 497.6,797.0 499.6,796.2 501.6,796.7 503.7,796.3 505.7,796.3 507.7,796.1 509.8,796.0 511.8,795.6 513.8,795.0 515.9,795.5 517.9,794.9 520.0,794.9 522.0,795.1 524.0,794.8 526.1,794.6 528.1,795.3 530.1,795.3 532.2,795.4 534.2,795.6 536.2,796.3 538.3,796.3 540.3,796.6 542.4,796.2 544.4,796.1 546.4,796.4 548.5,796.7 550.5,796.2 552.5,796.7 554.6,796.8 556.6,796.7 558.7,796.8 560.7,796.1 562.7,796.7 564.8,796.9 566.8,796.2 568.8,796.4 570.9,796.4 572.9,796.7 574.9,796.6 577.0,796.7 579.0,796.9 581.1,796.3 583.1,796.4 585.1,797.0 587.2,797.5 589.2,798.0 591.2,799.3 593.3,799.7 595.3,799.7 597.3,800.1 599.4,800.1 601.4,800.2 603.5,800.4 605.5,800.7 607.5,800.8 609.6,800.7 611.6,800.7 613.6,801.0 615.7,800.9 617.7,801.4 619.8,801.6 621.8,801.4 623.8,801.3 625.9,801.5 627.9,801.7 629.9,802.0 632.0,802.3 634.0,802.0 636.0,802.5 638.1,802.4 640.1,802.4 642.6,802.8 645.1,803.3 647.5,803.8 650.0,804.0 652.0,804.2 654.0,804.1 656.0,803.9 658.0,804.1 660.1,804.2 662.2,803.7 664.3,804.0 666.4,803.9 668.5,804.3 670.5,804.3 672.6,803.8 674.7,804.2 676.8,804.1 678.9,803.7 680.9,803.8 683.0,803.6 685.1,804.1 687.2,804.0 689.3,804.1 691.4,804.0 693.4,803.9 695.5,803.9 697.6,803.8 699.7,803.4 701.8,803.8 703.9,803.3 705.9,803.3 708.0,803.8 710.1,803.1 712.1,803.1 714.2,803.0 716.3,803.6 718.4,803.1 720.4,803.1 722.5,803.8 724.6,803.3 726.6,804.0 728.7,804.0 730.8,804.2 732.9,804.4 734.9,804.2 737.0,804.4 739.1,803.9 741.1,804.6 743.2,804.5 745.3,804.7 747.3,804.3 749.4,804.9 751.5,805.2 753.6,804.6 755.6,804.9 757.7,805.1 759.8,805.4 761.8,805.1 763.9,805.1 766.0,805.2 768.1,805.6 770.1,805.8 772.2,805.6 774.3,805.6 776.3,806.8 778.4,807.9 780.5,809.1 782.6,810.0 784.6,810.8 786.7,811.7 788.8,811.8 790.8,812.6 792.9,812.0 795.0,812.2 797.1,812.1 799.1,811.9 801.2,811.6 803.3,811.4 805.3,811.4 807.4,811.5 809.5,810.7 811.6,810.5 813.6,810.9 815.7,810.9 817.8,810.4 819.8,810.2 821.9,810.2 824.0,809.6 826.1,809.8 828.1,809.9 830.2,810.4 832.3,810.3 834.3,810.3 836.4,810.8 838.5,811.2 840.6,810.8 842.6,811.2 844.7,811.1 846.8,811.6 848.8,811.5 850.9,811.4 853.0,811.5 855.1,811.5 857.1,812.0 859.2,811.3 861.3,810.5 863.3,810.0 865.4,809.3 867.5,809.1 869.6,808.0 871.6,808.0 873.7,807.0 875.8,808.3 877.8,809.5 879.9,811.0 882.0,812.2 884.1,811.8 886.1,811.6 888.2,811.6 890.3,811.5 892.3,811.0 894.4,811.1 896.5,811.1 898.6,810.5 900.6,810.1 902.7,809.9 904.8,810.1 906.8,809.9 908.9,810.0 911.0,809.7 913.0,809.0 915.1,808.8 917.2,809.1 919.3,809.3 921.3,810.0 923.4,810.4 925.5,810.7 927.5,810.4 929.6,811.2 931.7,811.0 933.7,811.1 935.7,811.3 937.7,810.7 939.8,810.7 941.8,811.3 943.8,810.8 945.8,810.9 947.8,811.0 949.8,811.1 951.8,810.5 953.9,810.8 955.9,810.8 957.9,810.8 959.9,810.6 961.9,810.9 963.9,811.1 965.9,810.7 968.0,810.8 970.0,810.4 972.0,810.5 974.0,810.8 976.0,810.3 978.0,810.9 980.1,810.9 982.1,810.3 984.1,810.9 986.1,810.4 988.1,810.7 990.1,810.7 992.1,810.3 994.2,810.6 996.2,810.5 998.2,810.6 1000.2,810.2 1002.2,810.6 1004.2,810.7 1006.3,810.4 1008.3,810.1 1010.4,809.5 1012.5,809.6 1014.5,809.2 1016.6,809.3 1018.7,809.0 1020.8,808.7 1022.8,808.1 1024.9,808.3 1027.0,808.0 1029.0,807.4 1031.1,807.7 1033.2,807.5 1035.3,807.1 1037.3,807.7 1039.4,807.0 1041.5,807.1 1043.5,807.4 1045.6,807.3 1047.7,807.2 1049.8,807.3 1051.8,807.1 1053.9,807.0 1056.0,806.8 1058.0,806.7 1060.1,807.2 1062.2,807.2 1064.3,807.0 1066.3,807.2 1068.3,806.8 1070.3,806.7 1072.3,806.8 1074.4,807.1 1076.4,806.4 1078.4,806.8 1080.4,806.6 1082.4,806.9 1084.5,806.6 1086.5,806.5 1088.5,806.6 1090.5,806.6 1092.5,806.8 1094.6,806.4 1096.6,806.8 1098.6,806.2 1100.6,806.3 1102.6,806.1 1104.7,806.1 1106.7,806.6 1108.7,806.5 1110.7,806.0 1112.7,806.0 1114.8,806.2 1116.8,806.4 1118.8,806.4 1120.8,806.3 1122.9,806.2 1124.9,805.8 1126.9,806.0 1128.9,805.8 1130.9,806.0 1133.0,806.0 1135.0,805.7 1137.0,805.7 1139.0,806.1 1141.0,805.5 1143.1,806.1 1145.1,806.1 1147.1,806.1 1149.2,805.7 1151.2,805.9 1153.3,806.0 1155.4,806.1 1157.5,806.4 1159.5,806.3 1161.6,806.0 1163.7,806.5 1165.7,806.3 1167.8,806.5 1169.9,806.6 1172.0,806.1 1174.0,806.8 1176.1,806.8 1178.2,806.7 1180.2,806.8 1182.3,806.8 1184.4,806.6 1186.5,807.0 1188.5,806.6 1190.8,807.0 1193.1,807.1 1195.4,806.9 1197.7,807.0 1200.0,807.3 1202.2,807.2 1204.5,806.5 1206.7,807.0 1209.0,806.8 1211.2,806.3 1213.5,806.5 1215.7,806.3 1217.5,807.5 1220.4,803.1 1221.7,804.0 1223.8,802.4 1226.0,801.8 1230.0,802.2 1232.1,801.6 1234.3,802.0 1236.5,801.7" fill="none" stroke="#6c6c80" stroke-width="1" stroke-linejoin="round" stroke-linecap="round"/>
<polyline points="1238.7,801.8 1240.9,801.5 1243.1,801.4 1245.3,801.0 1247.5,801.2 1249.7,801.2 1251.9,801.0 1254.1,800.7 1256.2,801.0 1258.3,800.8 1260.5,800.5 1262.6,800.5 1264.8,800.6 1266.9,800.7 1269.1,800.7 1271.2,801.1 1273.4,801.3 1275.5,801.2 1277.6,800.1 1279.7,799.4 1281.8,798.2 1283.9,798.3 1286.0,798.5 1288.1,798.2 1290.2,798.1 1292.3,798.6 1294.4,798.5 1296.6,798.2 1298.9,798.1 1301.1,798.2 1303.4,798.2 1305.6,797.9 1307.9,797.6 1310.1,797.8 1312.1,798.0 1314.2,797.4 1316.2,797.4 1318.2,797.0 1320.2,796.9 1322.2,796.7 1324.3,796.7 1326.4,797.0 1328.5,797.4 1330.6,798.0 1332.7,798.0 1334.8,798.3 1336.9,798.0 1339.0,797.9 1341.1,798.3 1343.1,798.2 1345.2,798.5 1347.3,798.0 1349.4,798.2 1352.1,797.8 1354.7,797.1 1357.3,797.4 1359.4,796.8 1361.5,796.7 1363.6,797.0 1365.7,796.8 1367.8,797.2 1369.9,796.9 1372.0,796.8 1374.1,796.7 1376.2,797.2 1378.3,796.9 1380.4,797.3 1382.5,797.0 1384.6,797.4 1386.7,796.9 1388.8,796.9 1391.0,796.9 1393.3,797.3 1395.5,797.2 1397.8,796.9 1400.0,796.7 1402.3,797.2 1404.5,797.1" fill="none" stroke="#7b8ca3" stroke-width="1" stroke-linejoin="round" stroke-linecap="round"/>
<rect x="84.5" y="788.8" width="1324" height="29.2" rx="2.5" fill="none" stroke="#5c5c6e" stroke-width="1.2"/>
<rect x="1238" y="782" width="171.5" height="6.3" fill="#474747"/>
<rect x="1238" y="788" width="171" height="1.5" fill="#6a6a80"/>
<rect x="1320.5" y="783.2" width="1.3" height="3.8" fill="#fff"/><rect x="1322.8" y="783.2" width="1.3" height="3.8" fill="#fff"/><rect x="1325.1" y="783.2" width="1.3" height="3.8" fill="#fff"/>
<circle cx="1238.5" cy="803.3" r="11.8" fill="#353559" stroke="#d5d5ea" stroke-width="1.4"/>
<rect x="1234.2" y="798.3" width="2.6" height="9.6" fill="none" stroke="#e0e0f0" stroke-width="1"/>
<rect x="1240.2" y="798.3" width="2.6" height="9.6" fill="none" stroke="#e0e0f0" stroke-width="1"/>
<circle cx="1408.4" cy="803.3" r="11.8" fill="#353559" stroke="#d5d5ea" stroke-width="1.4"/>
<rect x="1404.1000000000001" y="798.3" width="2.6" height="9.6" fill="none" stroke="#e0e0f0" stroke-width="1"/>
<rect x="1410.1000000000001" y="798.3" width="2.6" height="9.6" fill="none" stroke="#e0e0f0" stroke-width="1"/>
<rect x="1402" y="803" width="20" height="20" fill="#6b6b6b"/>
<path d="M1418.5,816 L1418.5,820.5 L1413.5,820.5" fill="none" stroke="#404040" stroke-width="1.3"/>
</g>
</svg>

<div id="hachk" class="abs"></div>
<div id="haLbl" class="abs">Heikin Ashi</div>
<div id="sel2" class="abs"><span class="t">default</span>
<svg style="position:absolute;left:129px;top:10px" width="12" height="8"><path d="M1,1 L6,6 L11,1" fill="none" stroke="#dcdcdc" stroke-width="1.6"/></svg></div>
<div id="gear" class="abs"><svg width="30" height="29" viewBox="0 0 30 29"><g transform="translate(15,14.6) scale(0.74)" fill="#fff"><circle r="5.2"/><g id="teeth"><rect x="-1.6" y="-7.5" width="3.2" height="15"/><rect x="-1.6" y="-7.5" width="3.2" height="15" transform="rotate(45)"/><rect x="-1.6" y="-7.5" width="3.2" height="15" transform="rotate(90)"/><rect x="-1.6" y="-7.5" width="3.2" height="15" transform="rotate(135)"/></g><circle r="2.2" fill="#6c757d"/></g></svg></div>

<!-- legend -->
<svg class="abs" style="left:810px;top:120px" width="610" height="26" viewBox="810 120 610 26">
<rect x="815" y="124.7" width="27.4" height="16.3" rx="4" fill="#26a69a"/>
<rect x="904.3" y="125.9" width="25" height="13.9" rx="3" fill="#7b7b7b"/>
<path d="M989.3,139.8 L1013.7,139.8 L1001.5,125.9 Z" fill="#00c722"/>
<path d="M1061.4,132.8 L1073.5,127 L1085.5,132.8 L1073.5,138.6 Z" fill="#d29e25"/>
<line x1="1124.6" y1="132.8" x2="1149.6" y2="132.8" stroke="#6a1b9a" stroke-width="2"/><circle cx="1137.1" cy="132.8" r="6" fill="#6a1b9a"/>
<line x1="1206" y1="132.8" x2="1230.8" y2="132.8" stroke="#2b6b1f" stroke-width="2"/><circle cx="1218.4" cy="132.8" r="6" fill="#2b6b1f"/>
<line x1="1283.4" y1="132.8" x2="1308.6" y2="132.8" stroke="#d4168f" stroke-width="2"/><circle cx="1296" cy="132.8" r="6" fill="#d4168f"/>
<circle cx="1345" cy="132.8" r="7" fill="#4a86e8"/>
</svg>
<div class="legt" style="left:846.3px">Candles</div>
<div class="legt" style="left:934.9px">Volume</div>
<div class="legt" style="left:1019.5px">Entry</div>
<div class="legt" style="left:1091.3px">Exit</div>
<div class="legt" style="left:1155.3px">ema_8</div>
<div class="legt" style="left:1236px">rvwap</div>
<div class="legt" style="left:1313.9px">rsi</div>
<div class="legt" style="left:1363px">Trades</div>

<!-- modal -->
<svg class="abs" style="left:0;top:0" width="1424" height="823" viewBox="0 0 1424 823">
<rect x="232.5" y="30.5" width="499" height="600" rx="8" fill="#121212" stroke="#3d3d3d"/>
<line x1="233" y1="90.5" x2="731" y2="90.5" stroke="#4a525a"/>
<text x="249" y="66.8" class="mt">Plot Configurator</text>
<path d="M701,53 L715,67 M715,53 L701,67" stroke="#8e8e8e" stroke-width="1.5"/>
<text x="249.5" y="123" class="ml">Plot config name</text>
<rect x="249.5" y="137.5" width="317" height="28" rx="4" fill="#121212" stroke="#4b5056"/>
<text x="258.2" y="155" class="ms">default</text>
<path d="M541,148.5 L546,153.5 L551,148.5" fill="none" stroke="#dedede" stroke-width="1.5"/>
<rect x="571" y="137" width="33" height="29" rx="4" fill="#6c757d"/>
<rect x="608" y="137" width="33" height="29" rx="4" fill="#6c757d"/>
<rect x="645" y="137" width="33" height="29" rx="4" fill="#6c757d"/>
<rect x="682" y="137" width="33" height="29" rx="4" fill="#0289a2"/>
<!-- pencil -->
<g transform="translate(582.2,157.5) scale(0.84) translate(-582.2,-157.5)"><path d="M582.2,157.5 L583,153.6 L590.6,146 L593.4,148.8 L585.8,156.4 Z M591.6,145 L592.6,144 Q593.3,143.4 594,144 L595.4,145.4 Q596,146.1 595.4,146.8 L594.4,147.8 Z" fill="#fff"/></g>
<!-- copy -->
<path d="M618.5,155 L618.5,146.5 Q618.5,145 620,145 L627,145" fill="none" stroke="#fff" stroke-width="1.4"/>
<rect x="621.2" y="146.8" width="9" height="11.2" rx="1" fill="none" stroke="#fff" stroke-width="1.4"/>
<!-- trash -->
<g transform="translate(661.5,151.5) scale(0.78) translate(-661.5,-151.5)">
<rect x="655.5" y="146" width="12" height="1.8" fill="#fff"/>
<rect x="659.5" y="144.5" width="4" height="2" fill="#fff"/>
<path d="M656.8,148.6 L666.2,148.6 L665.6,157.5 Q665.5,158.2 664.8,158.2 L658.2,158.2 Q657.5,158.2 657.4,157.5 Z" fill="#fff"/>
</g>
<!-- plus square -->
<rect x="693.3" y="146.3" width="10.4" height="10.4" rx="1" fill="none" stroke="#fff" stroke-width="1.5"/>
<path d="M698.5,148.4 L698.5,154.6 M695.4,151.5 L701.6,151.5" stroke="#fff" stroke-width="1.5"/>
<line x1="249" y1="175" x2="715" y2="175" stroke="#2a2a2a"/>
<text x="249.5" y="199.2" class="ml">Target Plot</text>
<rect x="249.5" y="212.5" width="428" height="113" rx="4" fill="#121212" stroke="#4b5056"/>
<rect x="662" y="213" width="15" height="112" fill="#474747"/>
<path d="M666,223 L673,223 L669.5,219 Z M666,315 L673,315 L669.5,319 Z" fill="#8a8a8a"/>
<rect x="262" y="219" width="388" height="20" fill="#5b5b5b"/>
<text x="264.3" y="234.2" class="ml">main_plot</text>
<text x="264.3" y="253.9" class="ml">RSI</text>
<rect x="682" y="297" width="33" height="29" rx="4" fill="#0289a2"/>
<rect x="693.3" y="306.3" width="10.4" height="10.4" rx="1" fill="none" stroke="#fff" stroke-width="1.5"/>
<path d="M698.5,308.4 L698.5,314.6 M695.4,311.5 L701.6,311.5" stroke="#fff" stroke-width="1.5"/>
<line x1="249" y1="335" x2="715" y2="335" stroke="#2a2a2a"/>
<text x="249.5" y="359.2" class="ml">Indicators in this plot</text>
<rect x="249.5" y="373.5" width="465" height="92.5" rx="4" fill="#121212" stroke="#4b5056"/>
<rect x="699" y="374" width="15" height="91.5" fill="#474747"/>
<path d="M703,384 L710,384 L706.5,380 Z M703,456 L710,456 L706.5,460 Z" fill="#8a8a8a"/>
<text x="264.3" y="394.8" class="ml">stoploss &lt;-- not available in this chart</text>
<text x="264.3" y="414.4" class="ml">ema_8</text>
<text x="264.3" y="434" class="ml">rvwap</text>
<rect x="249" y="471" width="231" height="29" rx="4" fill="#50555b"/>
<text x="364.5" y="489.1" class="mb" text-anchor="middle" fill="#a8a8a8">Remove indicator</text>
<rect x="484" y="471" width="231" height="29" rx="4" fill="#0289a2"/>
<text x="599.5" y="489.1" class="mb" text-anchor="middle" fill="#fff">Add new indicator</text>
<line x1="249" y1="508.5" x2="715" y2="508.5" stroke="#2a2a2a"/>
<rect x="253" y="517" width="113" height="29" rx="4" fill="#6c757d"/>
<text x="309.5" y="534.6" class="mb" text-anchor="middle" fill="#fff">Reset</text>
<rect x="370" y="517" width="112" height="29" rx="4" fill="#6c757d"/>
<text x="426" y="534.6" class="mb" text-anchor="middle" fill="#fff">From strategy</text>
<rect x="486" y="517" width="113" height="29" rx="4" fill="#6c757d"/>
<text x="542.5" y="534.6" class="mb" text-anchor="middle" fill="#fff">Show</text>
<rect x="603" y="517" width="112" height="29" rx="4" fill="#0289a2"/>
<text x="659" y="534.6" class="mb" text-anchor="middle" fill="#fff">Save</text>
<line x1="233" y1="562.5" x2="731" y2="562.5" stroke="#4a525a"/>
<rect x="670" y="579" width="45" height="35" rx="5" fill="#0289a2"/>
<text x="692.5" y="601.5" class="mok" text-anchor="middle" fill="#fff">Ok</text>
</svg>
</body></html>
